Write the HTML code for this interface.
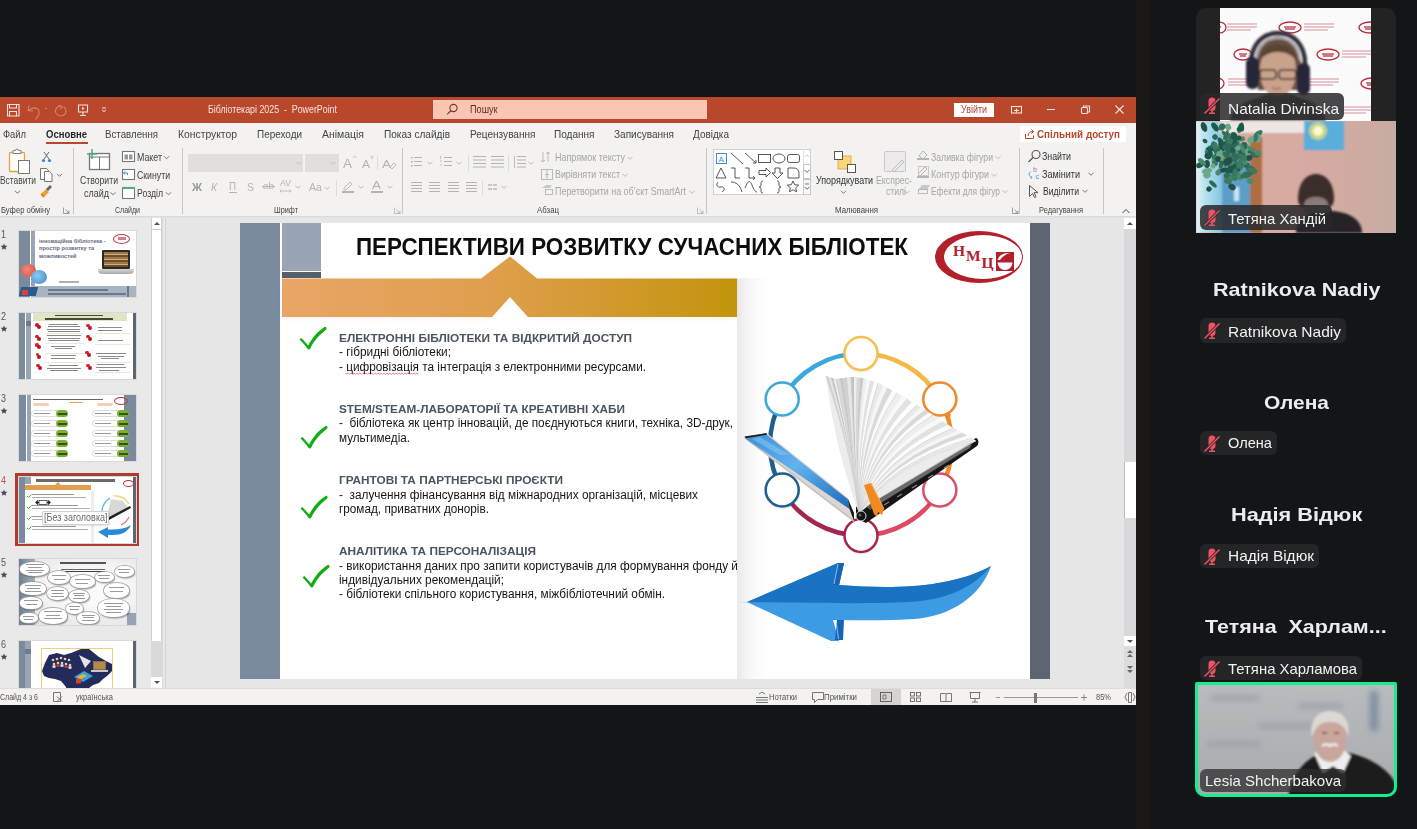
<!DOCTYPE html>
<html><head><meta charset="utf-8"><style>
*{margin:0;padding:0;box-sizing:border-box}
html,body{width:1417px;height:829px;overflow:hidden}
body{background:#131619;position:relative;font-family:"Liberation Sans",sans-serif}
.a{position:absolute}
.t{position:absolute;white-space:nowrap;line-height:1;transform-origin:0 50%}
svg{position:absolute;overflow:visible}
</style></head><body>
<div class="a" style="left:0;top:97px;width:1136px;height:608px;background:#f3f2f1"></div>
<div class="a" style="left:0;top:97px;width:1136px;height:26px;background:#b9472b"></div>
<svg style="left:0;top:97px" width="120" height="26"><g fill="none" stroke="#f6e3dc" stroke-width="1.1"><path d="M7.5 7.5h11.5v11.5h-11.5z"/><path d="M9.5 7.5v3.5h7v-3.5"/><path d="M9.5 19v-4.5h7v4.5"/></g><g fill="none" stroke="#d9826a" stroke-width="1.1"><path d="M29 105.5l-1 5 5 0.5" transform="translate(0 -97)"/><path d="M28.5 14c3-4 8-4 10-1s0 6-3 9.5"/><path d="M45 11.5h2"/><path d="M62 9.5c-4-1-6.5 1.5-6.5 4.5s2.5 5 5.5 5 5.5-2.5 5-5.5c-0.3-2-1.5-3-2.5-3.7"/><path d="M58.5 8.5l3.5 1-1.5 3"/></g><g fill="none" stroke="#f6e3dc" stroke-width="1.1"><path d="M78.5 8h9v7h-9z"/><path d="M83 15v3.5M80 18.5h6"/></g><path d="M82 9.8l2.5 1.6-2.5 1.6z" fill="#f6e3dc"/><path d="M102 13l2 1.6 2-1.6M102 11h4" fill="none" stroke="#f6e3dc" stroke-width="1"/></svg>
<div class="a" style="left:433px;top:100px;width:274px;height:19px;background:#fbc5b3"></div>
<svg style="left:440px;top:100px" width="30" height="19"><g fill="none" stroke="#6b3a2c" stroke-width="1.1"><circle cx="13.5" cy="8" r="3.6"/><path d="M11 10.5l-3.8 3.8"/></g></svg>
<div class="a" style="left:954px;top:103px;width:40px;height:14px;background:#fff"></div>
<svg style="left:1000px;top:97px" width="136" height="26"><g fill="none" stroke="#f6e3dc" stroke-width="1.1"><rect x="11.5" y="9.5" width="10" height="6.5"/><path d="M14 13.5h5M16.5 11.5v4"/><path d="M47 12.5h8"/><rect x="81.5" y="10.5" width="6" height="6" rx="1"/><path d="M83.5 10.5v-1.5h6v6h-2"/><path d="M115.5 8.5l8 8M123.5 8.5l-8 8"/></g></svg>
<div class="a" style="left:46px;top:142px;width:42px;height:2px;background:#b9472b"></div>
<div class="a" style="left:1020px;top:126px;width:106px;height:16px;background:#fff"></div>
<svg style="left:1020px;top:126px" width="20" height="16"><g fill="none" stroke="#b9472b" stroke-width="1"><path d="M5.5 8v4.5h8v-3"/><path d="M8 10c0-3 2-4.5 5-4.5M11.5 3.5l2 2-2 2"/></g></svg>
<div class="a" style="left:73px;top:148px;width:1px;height:66px;background:#c8c6c4"></div>
<div class="a" style="left:182px;top:148px;width:1px;height:66px;background:#c8c6c4"></div>
<div class="a" style="left:402px;top:148px;width:1px;height:66px;background:#c8c6c4"></div>
<div class="a" style="left:706px;top:148px;width:1px;height:66px;background:#c8c6c4"></div>
<div class="a" style="left:1019px;top:148px;width:1px;height:66px;background:#c8c6c4"></div>
<div class="a" style="left:1103px;top:148px;width:1px;height:66px;background:#c8c6c4"></div>
<div class="a" style="left:188px;top:154px;width:115px;height:18px;background:#e1dfdd"></div>
<div class="a" style="left:305px;top:154px;width:34px;height:18px;background:#e1dfdd"></div>
<div class="a" style="left:377px;top:156px;width:1px;height:14px;background:#dcdcdc"></div>
<div class="a" style="left:229px;top:192px;width:8px;height:1px;background:#b4b4b4"></div>
<div class="a" style="left:262px;top:186px;width:13px;height:1px;background:#b4b4b4"></div>
<div class="a" style="left:336px;top:180px;width:1px;height:16px;background:#dcdcdc"></div>
<div class="a" style="left:371px;top:191px;width:12px;height:2px;background:#b4b4b4"></div>
<div class="a" style="left:468px;top:155px;width:1px;height:17px;background:#dcdcdc"></div>
<div class="a" style="left:508px;top:155px;width:1px;height:17px;background:#dcdcdc"></div>
<div class="a" style="left:482px;top:180px;width:1px;height:16px;background:#dcdcdc"></div>
<div class="a" style="left:713px;top:149px;width:98px;height:46px;background:#fff;border:1px solid #d2d0ce"></div>
<div class="a" style="left:803px;top:149px;width:8px;height:46px;border-left:1px solid #e1dfdd"></div>
<div class="a" style="left:803px;top:164px;width:8px;height:15px;border:1px solid #c8c6c4;background:#fff"></div>
<div class="a" style="left:803px;top:179px;width:8px;height:16px;border:1px solid #c8c6c4;background:#f8f8f8"></div>
<svg style="left:0;top:0" width="1136" height="220"><rect x="9.5" y="152.5" width="15" height="19" rx="1" fill="#fff" stroke="#e8a33d" stroke-width="1.3"/><path d="M13 152.5v-2h2.5a1.5 1.5 0 0 1 3 0h2.5v3h-8z" fill="#fff" stroke="#777" stroke-width="0.9"/><rect x="18.5" y="160.5" width="11" height="13" fill="#fff" stroke="#777" stroke-width="1"/><path d="M15.0 190.8l2.5 2.5 2.5-2.5" fill="none" stroke="#666" stroke-width="0.9"/><path d="M44 152l5 7M49 152l-5 7" stroke="#555" stroke-width="0.9" fill="none"/><circle cx="43.5" cy="160.5" r="1.6" fill="#3b7dd8"/><circle cx="49.5" cy="160.5" r="1.6" fill="#3b7dd8"/><path d="M40.5 168.5h6l2 2v9h-8z" fill="#fff" stroke="#666" stroke-width="0.9"/><path d="M44.5 171.5h5l2.5 2.5v7.5h-7.5z" fill="#fff" stroke="#666" stroke-width="0.9"/><path d="M57.0 173.8l2.5 2.5 2.5-2.5" fill="none" stroke="#666" stroke-width="0.9"/><path d="M41 194l5-5 3 3-5 5z" fill="#f0a030"/><path d="M46 189l4-4 2 2-4 4" fill="#666"/><path d="M41 194l3 3" stroke="#e07020" stroke-width="1.5"/><path d="M63.5 207.5v6h6M65.5 209.5l3.5 3.5M69.0 210.5v2.5h-2.5" fill="none" stroke="#8a8a8a" stroke-width="0.8"/><rect x="89.5" y="153.5" width="20" height="16" fill="#fff" stroke="#777" stroke-width="1.3"/><path d="M99.5 157v12.5M89.5 157h20" stroke="#777" stroke-width="1"/><path d="M92 149v10M87 154h10" stroke="#4caf7a" stroke-width="1.5"/><path d="M110.5 192.3l2.5 2.5 2.5-2.5" fill="none" stroke="#666" stroke-width="0.9"/><rect x="122.5" y="151.5" width="12" height="10" fill="#fff" stroke="#777" stroke-width="1.1"/><path d="M124.5 154.5h3.5v5h-3.5zM129 154.5h3.5v5h-3.5z" fill="#999"/><path d="M164.0 156.3l2.5 2.5 2.5-2.5" fill="none" stroke="#666" stroke-width="0.9"/><rect x="122.5" y="169.5" width="12" height="10" fill="#fff" stroke="#777" stroke-width="1.1"/><path d="M125 171.5l-1.5 1.5 1.5 1.5M123.5 173h4v2" fill="none" stroke="#3b7dd8" stroke-width="0.9"/><rect x="122.5" y="187.5" width="12" height="11" fill="#fff" stroke="#777" stroke-width="1.1"/><path d="M122 187h13v2h-13z" fill="#4caf7a"/><path d="M166.0 192.3l2.5 2.5 2.5-2.5" fill="none" stroke="#666" stroke-width="0.9"/><path d="M296.5 161.8l2.5 2.5 2.5-2.5" fill="none" stroke="#c0c0c0" stroke-width="0.9"/><path d="M330.5 161.8l2.5 2.5 2.5-2.5" fill="none" stroke="#c0c0c0" stroke-width="0.9"/><path d="M390 167l4-4 2 2-4 4z" fill="none" stroke="#b4b4b4" stroke-width="0.9"/><path d="M280 191h11M281.5 189.5l-1.5 1.5 1.5 1.5M289.5 189.5l1.5 1.5-1.5 1.5" fill="none" stroke="#b4b4b4" stroke-width="0.8"/><path d="M295.5 185.8l2.5 2.5 2.5-2.5" fill="none" stroke="#b4b4b4" stroke-width="0.9"/><path d="M324.5 186.8l2.5 2.5 2.5-2.5" fill="none" stroke="#b4b4b4" stroke-width="0.9"/><path d="M344 188l6-6 2 2-6 6h-2z" fill="none" stroke="#b4b4b4" stroke-width="0.9"/><rect x="342" y="191" width="12" height="2" fill="#b4b4b4"/><path d="M358.5 185.8l2.5 2.5 2.5-2.5" fill="none" stroke="#b4b4b4" stroke-width="0.9"/><path d="M387.5 185.8l2.5 2.5 2.5-2.5" fill="none" stroke="#b4b4b4" stroke-width="0.9"/><path d="M394.5 207.5v6h6M396.5 209.5l3.5 3.5M400.0 210.5v2.5h-2.5" fill="none" stroke="#b0b0b0" stroke-width="0.8"/><g><rect x="411" y="157" width="1.6" height="1.6" fill="#b4b4b4"/><rect x="411" y="161" width="1.6" height="1.6" fill="#b4b4b4"/><rect x="411" y="165" width="1.6" height="1.6" fill="#b4b4b4"/><path d="M414 157.5h8" stroke="#b4b4b4" stroke-width="1"/><path d="M414 161.5h8" stroke="#b4b4b4" stroke-width="1"/><path d="M414 165.5h8" stroke="#b4b4b4" stroke-width="1"/></g><path d="M427.5 161.8l2.5 2.5 2.5-2.5" fill="none" stroke="#b4b4b4" stroke-width="0.9"/><path d="M444 157.5h8" stroke="#b4b4b4" stroke-width="1"/><path d="M444 161.5h8" stroke="#b4b4b4" stroke-width="1"/><path d="M444 165.5h8" stroke="#b4b4b4" stroke-width="1"/><path d="M440.5 156v3M440 161h2M440 165h2" stroke="#b4b4b4" stroke-width="0.8"/><path d="M456.5 161.8l2.5 2.5 2.5-2.5" fill="none" stroke="#b4b4b4" stroke-width="0.9"/><path d="M473 156.5h13" stroke="#b4b4b4" stroke-width="1"/><path d="M473 160.0h13" stroke="#b4b4b4" stroke-width="1"/><path d="M473 163.5h13" stroke="#b4b4b4" stroke-width="1"/><path d="M473 167.0h13" stroke="#b4b4b4" stroke-width="1"/><path d="M491 156.5h13" stroke="#b4b4b4" stroke-width="1"/><path d="M491 160.0h13" stroke="#b4b4b4" stroke-width="1"/><path d="M491 163.5h13" stroke="#b4b4b4" stroke-width="1"/><path d="M491 167.0h13" stroke="#b4b4b4" stroke-width="1"/><path d="M517 156.5h9" stroke="#b4b4b4" stroke-width="1"/><path d="M517 160.0h9" stroke="#b4b4b4" stroke-width="1"/><path d="M517 163.5h9" stroke="#b4b4b4" stroke-width="1"/><path d="M517 167.0h9" stroke="#b4b4b4" stroke-width="1"/><path d="M514.5 156v12" stroke="#b4b4b4" stroke-width="0.9"/><path d="M528.5 161.8l2.5 2.5 2.5-2.5" fill="none" stroke="#b4b4b4" stroke-width="0.9"/><path d="M411 182.5h11" stroke="#b4b4b4" stroke-width="1"/><path d="M411 185.5h11" stroke="#b4b4b4" stroke-width="1"/><path d="M411 188.5h11" stroke="#b4b4b4" stroke-width="1"/><path d="M411 191.5h11" stroke="#b4b4b4" stroke-width="1"/><path d="M429 182.5h11" stroke="#b4b4b4" stroke-width="1"/><path d="M429 185.5h11" stroke="#b4b4b4" stroke-width="1"/><path d="M429 188.5h11" stroke="#b4b4b4" stroke-width="1"/><path d="M429 191.5h11" stroke="#b4b4b4" stroke-width="1"/><path d="M448 182.5h11" stroke="#b4b4b4" stroke-width="1"/><path d="M448 185.5h11" stroke="#b4b4b4" stroke-width="1"/><path d="M448 188.5h11" stroke="#b4b4b4" stroke-width="1"/><path d="M448 191.5h11" stroke="#b4b4b4" stroke-width="1"/><path d="M466 182.5h11" stroke="#b4b4b4" stroke-width="1"/><path d="M466 185.5h11" stroke="#b4b4b4" stroke-width="1"/><path d="M466 188.5h11" stroke="#b4b4b4" stroke-width="1"/><path d="M466 191.5h11" stroke="#b4b4b4" stroke-width="1"/><path d="M488 184h4v2h-4zM493 184h4v2h-4zM488 188h4v2h-4zM493 188h4v2h-4z" fill="#c8c8c8"/><path d="M501.5 185.8l2.5 2.5 2.5-2.5" fill="none" stroke="#b4b4b4" stroke-width="0.9"/><path d="M543 152v10M541 160l2 2 2-2M548 152v10M546 154l2-2 2 2" fill="none" stroke="#b4b4b4" stroke-width="0.9"/><path d="M627.5 156.8l2.5 2.5 2.5-2.5" fill="none" stroke="#b4b4b4" stroke-width="0.9"/><rect x="541.5" y="169.5" width="11" height="10" fill="none" stroke="#b4b4b4" stroke-width="0.9"/><path d="M547 170v9M545 174.5h4" stroke="#b4b4b4" stroke-width="0.9"/><path d="M622.5 173.8l2.5 2.5 2.5-2.5" fill="none" stroke="#b4b4b4" stroke-width="0.9"/><path d="M542 188l4-3h6l-2 3z" fill="#c8c8c8"/><rect x="545.5" y="189.5" width="7" height="5" fill="none" stroke="#b4b4b4" stroke-width="0.9"/><path d="M689.5 190.8l2.5 2.5 2.5-2.5" fill="none" stroke="#b4b4b4" stroke-width="0.9"/><path d="M697.5 207.5v6h6M699.5 209.5l3.5 3.5M703.0 210.5v2.5h-2.5" fill="none" stroke="#b0b0b0" stroke-width="0.8"/><rect x="716.5" y="153.5" width="10" height="10" fill="none" stroke="#3b8ed8" stroke-width="1"/><text x="718.5" y="162" font-size="8" fill="#3b8ed8" font-family="Liberation Sans">A</text><g fill="none" stroke="#444" stroke-width="0.9"><path d="M731 153l12 11M745 153l11 10M756 163l-3 0M756 163v-3"/><rect x="758.5" y="154.5" width="12" height="8"/><ellipse cx="779" cy="158.5" rx="6" ry="4.5"/><rect x="787.5" y="154.5" width="12" height="8" rx="2"/><path d="M716 178l5-10 5 10z"/><path d="M731 168h4v10h5"/><path d="M745 168h4v10h6M753 176l2 2-2 2"/><path d="M759 170.5h7v-2.5l4.5 4.5-4.5 4.5v-2.5h-7z"/><path d="M775 168h5v5h3l-5.5 5.5-5.5-5.5h3z"/><path d="M788 168h6a5 5 0 0 1 5 5v5h-11z"/><path d="M718 182c-3 3 0 6 3 5s5 3 1 5"/><path d="M731 182c5 0 9 3 11 10"/><path d="M745 188c3-8 5-8 7-3s3 7 5 7"/><path d="M763 181c-2 0-2 1-2 3s0 3-2 3c2 0 2 1 2 3s0 3 2 3"/><path d="M777 181c2 0 2 1 2 3s0 3 2 3c-2 0-2 1-2 3s0 3-2 3"/><path d="M793 181l1.7 3.7 4 .4-3 2.7.9 4-3.6-2-3.6 2 .9-4-3-2.7 4-.4z"/></g><path d="M805 157l2-2 2 2" fill="none" stroke="#c0c0c0" stroke-width="0.8"/><path d="M804.5 169.8l2.5 2.5 2.5-2.5" fill="none" stroke="#555" stroke-width="0.9"/><path d="M805 184h4" stroke="#555" stroke-width="0.8"/><path d="M804.5 186.8l2.5 2.5 2.5-2.5" fill="none" stroke="#555" stroke-width="0.9"/><rect x="838" y="156" width="13" height="13" fill="#f8d67a" stroke="#e0a030" stroke-width="0.8"/><rect x="834.5" y="151.5" width="8" height="8" fill="#fff" stroke="#555" stroke-width="1"/><rect x="847.5" y="164.5" width="8" height="8" fill="#fff" stroke="#555" stroke-width="1"/><path d="M841.0 190.8l2.5 2.5 2.5-2.5" fill="none" stroke="#666" stroke-width="0.9"/><rect x="884.5" y="151.5" width="21" height="20" rx="1" fill="#eceaea" stroke="#c8c8c8" stroke-width="1"/><path d="M892 170l10-10 2 2-10 10z" fill="#e8e8e8" stroke="#b8b8b8" stroke-width="0.9"/><path d="M904.5 190.8l2.5 2.5 2.5-2.5" fill="none" stroke="#b4b4b4" stroke-width="0.9"/><path d="M919 156l4-5 4 4-4 4z" fill="none" stroke="#b4b4b4" stroke-width="1"/><rect x="917" y="158" width="12" height="2" fill="#b4b4b4"/><path d="M995.5 156.3l2.5 2.5 2.5-2.5" fill="none" stroke="#b4b4b4" stroke-width="0.9"/><path d="M918 174l7-7 2 2-7 7z" fill="none" stroke="#b4b4b4" stroke-width="1"/><rect x="918.5" y="166.5" width="10" height="9" fill="none" stroke="#c0c0c0" stroke-width="0.8"/><rect x="917" y="176" width="12" height="2" fill="#b4b4b4"/><path d="M991.5 173.8l2.5 2.5 2.5-2.5" fill="none" stroke="#b4b4b4" stroke-width="0.9"/><path d="M918 190l4-5h8l-3 5z" fill="#c8c8c8"/><rect x="918.5" y="189.5" width="9" height="4" fill="none" stroke="#b4b4b4" stroke-width="0.9"/><path d="M1002.5 190.3l2.5 2.5 2.5-2.5" fill="none" stroke="#b4b4b4" stroke-width="0.9"/><path d="M1012.5 207.5v6h6M1014.5 209.5l3.5 3.5M1018.0 210.5v2.5h-2.5" fill="none" stroke="#8a8a8a" stroke-width="0.8"/><circle cx="1036" cy="154.5" r="4" fill="none" stroke="#555" stroke-width="1.1"/><path d="M1033 157.5l-4.5 4.5" stroke="#555" stroke-width="1.2"/><text x="1033" y="172" font-size="7" fill="#b36bd8" font-family="Liberation Sans">b</text><text x="1035.5" y="179" font-size="7" fill="#3b8ed8" font-family="Liberation Sans">c</text><path d="M1030.5 172c-2 1-2 4 1 5M1030.5 177l1.5 0.5-1 1.2" fill="none" stroke="#3b8ed8" stroke-width="0.9"/><path d="M1088.5 172.8l2.5 2.5 2.5-2.5" fill="none" stroke="#666" stroke-width="0.9"/><path d="M1029.5 185.5v11l3-3 2 4 1.5-0.8-2-4h4z" fill="none" stroke="#555" stroke-width="1"/><path d="M1082.5 189.8l2.5 2.5 2.5-2.5" fill="none" stroke="#666" stroke-width="0.9"/><path d="M1122.5 213l3.5-3.5 3.5 3.5" fill="none" stroke="#444" stroke-width="1"/></svg>
<div class="a" style="left:0;top:216px;width:166px;height:473px;background:#e9e9e9;overflow:hidden"><div class="a" style="left:0;top:-216px;width:166px;height:1000px">
<div class="a" style="left:165px;top:216px;width:1px;height:473px;background:#d4d4d4"></div>
<div class="a" style="left:151px;top:218px;width:12px;height:471px;background:#d9d9d9"></div>
<div class="a" style="left:151px;top:218px;width:11px;height:423px;background:#fff;border-left:1px solid #d0d0d0;border-right:1px solid #d0d0d0"></div>
<div class="a" style="left:151px;top:229px;width:11px;height:1px;background:#d0d0d0"></div>
<div class="a" style="left:151px;top:677px;width:11px;height:11px;background:#fff"></div>
<svg style="left:151px;top:216px" width="12" height="473"><path d="M3 9l3-3 3 3z" fill="#555"/><path d="M3 465l3 3 3-3z" fill="#555"/></svg>
<svg style="left:0.8px;top:242.5px" width="10" height="10"><path transform="scale(0.75)" d="M4 0.5l1.3 3 3.2.3-2.4 2.1.7 3.2-2.8-1.7-2.8 1.7.7-3.2-2.4-2.1 3.2-.3z" fill="#4a4a4a"/></svg>
<svg style="left:0.8px;top:324.5px" width="10" height="10"><path transform="scale(0.75)" d="M4 0.5l1.3 3 3.2.3-2.4 2.1.7 3.2-2.8-1.7-2.8 1.7.7-3.2-2.4-2.1 3.2-.3z" fill="#4a4a4a"/></svg>
<svg style="left:0.8px;top:406.5px" width="10" height="10"><path transform="scale(0.75)" d="M4 0.5l1.3 3 3.2.3-2.4 2.1.7 3.2-2.8-1.7-2.8 1.7.7-3.2-2.4-2.1 3.2-.3z" fill="#4a4a4a"/></svg>
<svg style="left:0.8px;top:488.5px" width="10" height="10"><path transform="scale(0.75)" d="M4 0.5l1.3 3 3.2.3-2.4 2.1.7 3.2-2.8-1.7-2.8 1.7.7-3.2-2.4-2.1 3.2-.3z" fill="#4a4a4a"/></svg>
<svg style="left:0.8px;top:570.5px" width="10" height="10"><path transform="scale(0.75)" d="M4 0.5l1.3 3 3.2.3-2.4 2.1.7 3.2-2.8-1.7-2.8 1.7.7-3.2-2.4-2.1 3.2-.3z" fill="#4a4a4a"/></svg>
<svg style="left:0.8px;top:652.5px" width="10" height="10"><path transform="scale(0.75)" d="M4 0.5l1.3 3 3.2.3-2.4 2.1.7 3.2-2.8-1.7-2.8 1.7.7-3.2-2.4-2.1 3.2-.3z" fill="#4a4a4a"/></svg>
<div class="a" style="left:15px;top:473px;width:124px;height:73px;border:3px solid #b03a2e"></div>
<div class="a" style="left:19px;top:231px;width:117px;height:66px;background:#fff;overflow:hidden;box-shadow:0 0 0 1px #d8d8d8"><div class="a" style="left:0;top:0;width:11px;height:66px;background:#7b8a9c"></div><div class="a" style="left:12px;top:0;width:4px;height:66px;background:#9aa5b4"></div><div class="a" style="left:12px;top:55px;width:105px;height:11px;background:#a9b4c3"></div><div class="a" style="left:108px;top:55px;width:2px;height:11px;background:#6d7a8a"></div><div class="a" style="left:20px;top:7px;font:bold 5.6px/7.4px 'Liberation Sans';color:#5f6a80;white-space:nowrap">інноваційна бібліотека -<br>простір розвитку та<br>можливостей</div><div class="a" style="left:94px;top:3px;width:17px;height:10px;border:1.2px solid #c0394a;border-radius:50%"></div><div class="a" style="left:99px;top:6px;width:8px;height:3px;background:#d08090"></div><div class="a" style="left:83px;top:19px;width:28px;height:19px;background:#2e2a28;border-radius:1px"></div><div class="a" style="left:85px;top:21px;width:24px;height:15px;background:repeating-linear-gradient(#a07848 0 2px,#d8b070 2px 3px,#6a5030 3px 5px)"></div><div class="a" style="left:79px;top:38px;width:36px;height:5px;background:linear-gradient(#d8d8d8,#a8a8a8);border-radius:0 0 4px 4px"></div><div class="a" style="left:2px;top:33px;width:15px;height:13px;background:radial-gradient(circle at 40% 40%,#f08878,#d84a38);border-radius:50%"></div><div class="a" style="left:12px;top:39px;width:16px;height:14px;background:radial-gradient(circle at 40% 40%,#90c8f0,#3a88d0);border-radius:50%"></div><div class="a" style="left:1px;top:56px;width:17px;height:9px;background:#2a5a90;transform:skewX(-15deg)"></div><div class="a" style="left:3px;top:59px;width:6px;height:5px;background:#e04030"></div><div class="a" style="left:40px;top:50px;width:20px;height:1.5px;background:#b0b0b0"></div><div class="a" style="left:29px;top:58px;width:60px;height:1.5px;background:#6a7890"></div><div class="a" style="left:29px;top:62px;width:78px;height:1.5px;background:#6a7890"></div></div>
<div class="a" style="left:19px;top:313px;width:117px;height:66px;background:#fff;overflow:hidden;box-shadow:0 0 0 1px #d8d8d8"><div class="a" style="left:0;top:0;width:6px;height:66px;background:#7b8a9c"></div><div class="a" style="left:6.5px;top:0;width:5.5px;height:66px;background:#9aa5b4"></div><div class="a" style="left:6.5px;top:8px;width:5.5px;height:4.5px;background:#6d7a8a"></div><div class="a" style="left:114px;top:0;width:3px;height:66px;background:#5c6571"></div><div class="a" style="left:14px;top:0;width:94px;height:8px;background:#dde7c6"></div><div class="a" style="left:36px;top:1.5px;width:48px;height:1.5px;background:#4a4a30"></div><div class="a" style="left:26px;top:5px;width:68px;height:1.5px;background:#4a4a30"></div><div class="a" style="left:16px;top:10px;width:3.5px;height:3.5px;background:#d81e2a;border-radius:50%"></div><div class="a" style="left:17.5px;top:12px;width:4px;height:4px;background:#c0141e;border-radius:50%"></div><div class="a" style="left:16px;top:21.5px;width:3.5px;height:3.5px;background:#d81e2a;border-radius:50%"></div><div class="a" style="left:17.5px;top:23.5px;width:4px;height:4px;background:#c0141e;border-radius:50%"></div><div class="a" style="left:16px;top:30px;width:3.5px;height:3.5px;background:#d81e2a;border-radius:50%"></div><div class="a" style="left:17.5px;top:32px;width:4px;height:4px;background:#c0141e;border-radius:50%"></div><div class="a" style="left:16.5px;top:39.5px;width:3.5px;height:3.5px;background:#d81e2a;border-radius:50%"></div><div class="a" style="left:18.0px;top:41.5px;width:4px;height:4px;background:#c0141e;border-radius:50%"></div><div class="a" style="left:17px;top:50.5px;width:3.5px;height:3.5px;background:#d81e2a;border-radius:50%"></div><div class="a" style="left:18.5px;top:52.5px;width:4px;height:4px;background:#c0141e;border-radius:50%"></div><div class="a" style="left:67px;top:10.5px;width:3.5px;height:3.5px;background:#d81e2a;border-radius:50%"></div><div class="a" style="left:68.5px;top:12.5px;width:4px;height:4px;background:#c0141e;border-radius:50%"></div><div class="a" style="left:67px;top:21.5px;width:3.5px;height:3.5px;background:#d81e2a;border-radius:50%"></div><div class="a" style="left:68.5px;top:23.5px;width:4px;height:4px;background:#c0141e;border-radius:50%"></div><div class="a" style="left:66px;top:37.5px;width:3.5px;height:3.5px;background:#d81e2a;border-radius:50%"></div><div class="a" style="left:67.5px;top:39.5px;width:4px;height:4px;background:#c0141e;border-radius:50%"></div><div class="a" style="left:67px;top:50.5px;width:3.5px;height:3.5px;background:#d81e2a;border-radius:50%"></div><div class="a" style="left:68.5px;top:52.5px;width:4px;height:4px;background:#c0141e;border-radius:50%"></div><div class="a" style="left:30px;top:10.5px;width:29px;height:1px;background:#8a8a8a"></div><div class="a" style="left:29px;top:13px;width:32px;height:1px;background:#8a8a8a"></div><div class="a" style="left:28px;top:15.5px;width:33px;height:1px;background:#8a8a8a"></div><div class="a" style="left:29px;top:18px;width:32px;height:1px;background:#8a8a8a"></div><div class="a" style="left:28px;top:22px;width:34px;height:1px;background:#8a8a8a"></div><div class="a" style="left:29px;top:24.5px;width:32px;height:1px;background:#8a8a8a"></div><div class="a" style="left:30px;top:27px;width:30px;height:1px;background:#8a8a8a"></div><div class="a" style="left:32px;top:32.5px;width:24px;height:1px;background:#8a8a8a"></div><div class="a" style="left:36px;top:35px;width:17px;height:1px;background:#8a8a8a"></div><div class="a" style="left:32px;top:42px;width:25px;height:1px;background:#8a8a8a"></div><div class="a" style="left:32px;top:44.5px;width:24px;height:1px;background:#8a8a8a"></div><div class="a" style="left:30px;top:52px;width:29px;height:1px;background:#8a8a8a"></div><div class="a" style="left:28px;top:54.5px;width:34px;height:1px;background:#8a8a8a"></div><div class="a" style="left:31px;top:57px;width:28px;height:1px;background:#8a8a8a"></div><div class="a" style="left:79px;top:14px;width:24px;height:1px;background:#8a8a8a"></div><div class="a" style="left:79px;top:16.5px;width:24px;height:1px;background:#8a8a8a"></div><div class="a" style="left:79px;top:27px;width:25px;height:1px;background:#8a8a8a"></div><div class="a" style="left:77px;top:40px;width:30px;height:1px;background:#8a8a8a"></div><div class="a" style="left:79px;top:42.5px;width:26px;height:1px;background:#8a8a8a"></div><div class="a" style="left:82px;top:45px;width:18px;height:1px;background:#8a8a8a"></div><div class="a" style="left:78px;top:51px;width:27px;height:1px;background:#8a8a8a"></div><div class="a" style="left:77px;top:54px;width:30px;height:1px;background:#8a8a8a"></div><div class="a" style="left:80px;top:56.5px;width:20px;height:1px;background:#8a8a8a"></div><div class="a" style="left:27px;top:20px;width:38px;height:1px;background:#ece8d8"></div><div class="a" style="left:27px;top:30px;width:38px;height:1px;background:#ece8d8"></div><div class="a" style="left:27px;top:40px;width:38px;height:1px;background:#ece8d8"></div><div class="a" style="left:27px;top:49px;width:38px;height:1px;background:#ece8d8"></div><div class="a" style="left:76px;top:20px;width:35px;height:1px;background:#ece8d8"></div><div class="a" style="left:76px;top:31px;width:35px;height:1px;background:#ece8d8"></div><div class="a" style="left:76px;top:49px;width:35px;height:1px;background:#ece8d8"></div><div class="a" style="left:76px;top:59px;width:35px;height:1px;background:#ece8d8"></div></div>
<div class="a" style="left:19px;top:395px;width:117px;height:66px;background:#fff;overflow:hidden;box-shadow:0 0 0 1px #d8d8d8"><div class="a" style="left:0;top:0;width:7px;height:66px;background:#7b8a9c"></div><div class="a" style="left:8px;top:0;width:4px;height:66px;background:#9aa5b4"></div><div class="a" style="left:105px;top:0;width:12px;height:66px;background:#7b8a9c"></div><div class="a" style="left:14px;top:3.5px;width:70px;height:1.5px;background:#666"></div><div class="a" style="left:95px;top:2px;width:14px;height:8px;border:1px solid #c0394a;border-radius:50%"></div><div class="a" style="left:14px;top:8px;width:16px;height:3px;background:#f5d0b0;border-radius:2px"></div><div class="a" style="left:78px;top:8px;width:16px;height:3px;background:#f5d0b0;border-radius:2px"></div><div class="a" style="left:50px;top:7px;width:14px;height:1px;background:#e8a040"></div><div class="a" style="left:12px;top:15px;width:30px;height:7px;border:1px solid #ddd;border-radius:4px;background:#fff"></div><div class="a" style="left:37px;top:15px;width:12px;height:7px;background:#7ab030;border-radius:4px"></div><div class="a" style="left:12px;top:25px;width:30px;height:7px;border:1px solid #ddd;border-radius:4px;background:#fff"></div><div class="a" style="left:37px;top:25px;width:12px;height:7px;background:#7ab030;border-radius:4px"></div><div class="a" style="left:12px;top:35px;width:30px;height:7px;border:1px solid #ddd;border-radius:4px;background:#fff"></div><div class="a" style="left:37px;top:35px;width:12px;height:7px;background:#7ab030;border-radius:4px"></div><div class="a" style="left:12px;top:45px;width:30px;height:7px;border:1px solid #ddd;border-radius:4px;background:#fff"></div><div class="a" style="left:37px;top:45px;width:12px;height:7px;background:#7ab030;border-radius:4px"></div><div class="a" style="left:12px;top:55px;width:30px;height:7px;border:1px solid #ddd;border-radius:4px;background:#fff"></div><div class="a" style="left:37px;top:55px;width:12px;height:7px;background:#7ab030;border-radius:4px"></div><div class="a" style="left:73px;top:15px;width:30px;height:7px;border:1px solid #ddd;border-radius:4px;background:#fff"></div><div class="a" style="left:98px;top:15px;width:12px;height:7px;background:#7ab030;border-radius:4px"></div><div class="a" style="left:73px;top:25px;width:30px;height:7px;border:1px solid #ddd;border-radius:4px;background:#fff"></div><div class="a" style="left:98px;top:25px;width:12px;height:7px;background:#7ab030;border-radius:4px"></div><div class="a" style="left:73px;top:35px;width:30px;height:7px;border:1px solid #ddd;border-radius:4px;background:#fff"></div><div class="a" style="left:98px;top:35px;width:12px;height:7px;background:#7ab030;border-radius:4px"></div><div class="a" style="left:73px;top:45px;width:30px;height:7px;border:1px solid #ddd;border-radius:4px;background:#fff"></div><div class="a" style="left:98px;top:45px;width:12px;height:7px;background:#7ab030;border-radius:4px"></div><div class="a" style="left:73px;top:55px;width:30px;height:7px;border:1px solid #ddd;border-radius:4px;background:#fff"></div><div class="a" style="left:98px;top:55px;width:12px;height:7px;background:#7ab030;border-radius:4px"></div><div class="a" style="left:15px;top:18px;width:16px;height:1px;background:#999"></div><div class="a" style="left:38.5px;top:17.5px;width:9px;height:2px;background:#35501a"></div><div class="a" style="left:15px;top:28px;width:16px;height:1px;background:#999"></div><div class="a" style="left:38.5px;top:27.5px;width:9px;height:2px;background:#35501a"></div><div class="a" style="left:15px;top:38px;width:16px;height:1px;background:#999"></div><div class="a" style="left:38.5px;top:37.5px;width:9px;height:2px;background:#35501a"></div><div class="a" style="left:15px;top:48px;width:16px;height:1px;background:#999"></div><div class="a" style="left:38.5px;top:47.5px;width:9px;height:2px;background:#35501a"></div><div class="a" style="left:15px;top:58px;width:16px;height:1px;background:#999"></div><div class="a" style="left:38.5px;top:57.5px;width:9px;height:2px;background:#35501a"></div><div class="a" style="left:76px;top:18px;width:16px;height:1px;background:#999"></div><div class="a" style="left:99.5px;top:17.5px;width:9px;height:2px;background:#35501a"></div><div class="a" style="left:76px;top:28px;width:16px;height:1px;background:#999"></div><div class="a" style="left:99.5px;top:27.5px;width:9px;height:2px;background:#35501a"></div><div class="a" style="left:76px;top:38px;width:16px;height:1px;background:#999"></div><div class="a" style="left:99.5px;top:37.5px;width:9px;height:2px;background:#35501a"></div><div class="a" style="left:76px;top:48px;width:16px;height:1px;background:#999"></div><div class="a" style="left:99.5px;top:47.5px;width:9px;height:2px;background:#35501a"></div><div class="a" style="left:76px;top:58px;width:16px;height:1px;background:#999"></div><div class="a" style="left:99.5px;top:57.5px;width:9px;height:2px;background:#35501a"></div></div>
<div class="a" style="left:19px;top:477px;width:117px;height:66px;background:#fff;overflow:hidden;box-shadow:0 0 0 1px #d8d8d8"><div class="a" style="left:0;top:0;width:6px;height:66px;background:#7b8a9c"></div><div class="a" style="left:6px;top:0;width:6px;height:7px;background:#9aa5b4"></div><div class="a" style="left:114px;top:0;width:3px;height:66px;background:#5c6571"></div><div class="a" style="left:17px;top:2px;width:79px;height:2.5px;background:#6a6a6a"></div><div class="a" style="left:104px;top:2.5px;width:11px;height:7px;border:1px solid #c03040;border-radius:50%"></div><svg style="left:0;top:0" width="117" height="66"><path d="M6 8h30l3-3 3 3h30v5h-66z" fill="#e0a050"/><rect x="72" y="13" width="3" height="53" fill="#eeeeee"/><path d="M83 35a17 17 0 0 1 8-14" fill="none" stroke="#50b0e0" stroke-width="1.2"/><path d="M94 19a17 17 0 0 1 16 8" fill="none" stroke="#f0d060" stroke-width="1.2"/><path d="M110 40a17 17 0 0 1-8 8" fill="none" stroke="#e07080" stroke-width="1.2"/><path d="M88 40L92 22L104 24L110 32z" fill="#d8d8d8"/><path d="M88 41L111 29L112 31L90 43z" fill="#222"/><path d="M79 55L89 50L89 52.5C98 53 106 52 112 48C109 55 102 58 94 58L89 58L89 61z" fill="#2a88d8"/></svg><svg style="left:8px;top:17px" width="5" height="4"><path d="M0 2l1.5 1.5 3-3" fill="none" stroke="#30b030" stroke-width="1"/></svg><div class="a" style="left:13px;top:17px;width:42px;height:1px;background:#999"></div><div class="a" style="left:13px;top:19.5px;width:54px;height:0.8px;background:#b0b0b0"></div><svg style="left:8px;top:28px" width="5" height="4"><path d="M0 2l1.5 1.5 3-3" fill="none" stroke="#30b030" stroke-width="1"/></svg><div class="a" style="left:13px;top:28px;width:46px;height:1px;background:#999"></div><div class="a" style="left:13px;top:30.5px;width:58px;height:0.8px;background:#b0b0b0"></div><svg style="left:8px;top:39px" width="5" height="4"><path d="M0 2l1.5 1.5 3-3" fill="none" stroke="#30b030" stroke-width="1"/></svg><div class="a" style="left:13px;top:39px;width:36px;height:1px;background:#999"></div><div class="a" style="left:13px;top:41.5px;width:48px;height:0.8px;background:#b0b0b0"></div><svg style="left:8px;top:49px" width="5" height="4"><path d="M0 2l1.5 1.5 3-3" fill="none" stroke="#30b030" stroke-width="1"/></svg><div class="a" style="left:13px;top:49px;width:44px;height:1px;background:#999"></div><div class="a" style="left:13px;top:51.5px;width:56px;height:0.8px;background:#b0b0b0"></div><svg style="left:16px;top:22px" width="16" height="7"><path d="M1 3.5h14M3 1.5l-2 2 2 2M13 1.5l2 2-2 2" fill="none" stroke="#222" stroke-width="1.2"/><rect x="4" y="1.5" width="8" height="4" fill="#fff" stroke="#333" stroke-width="0.8"/></svg></div>
<div class="a" style="left:42px;top:510.5px;width:67px;height:14px;background:#fff;border:1px solid #d0d0d0;border-radius:2px;box-shadow:1px 1px 2px rgba(0,0,0,.12)"></div>
<div class="a" style="left:19px;top:559px;width:117px;height:66px;background:#fff;overflow:hidden;box-shadow:0 0 0 1px #d8d8d8"><div class="a" style="left:0;top:0;width:117px;height:66px;background:radial-gradient(ellipse at 60% 45%,#fafafa 30%,#dfe0e3 100%)"></div><div class="a" style="left:0;top:0;width:16px;height:66px;background:linear-gradient(90deg,#6e7e92,#a4b0be)"></div><div class="a" style="left:108px;top:54px;width:9px;height:12px;background:#95a3b4"></div><div class="a" style="left:41px;top:3.3px;width:46px;height:2px;background:#555"></div><div class="a" style="left:42px;top:9.5px;width:44px;height:1.5px;background:#666"></div><div class="a" style="left:42px;top:11.5px;width:44px;height:0.7px;background:#444"></div><div class="a" style="left:1.4px;top:2.8px;width:29.0px;height:14.5px;background:#fff;border-radius:45%;box-shadow:0 0 0 0.7px #9a9a9a,1px 1.5px 1.5px rgba(0,0,0,.35)"></div><div class="a" style="left:6.9px;top:5.4px;width:18.0px;height:0.7px;background:#9a9a9a"></div><div class="a" style="left:8.7px;top:8.1px;width:14.5px;height:0.7px;background:#9a9a9a"></div><div class="a" style="left:6.9px;top:10.7px;width:18.0px;height:0.7px;background:#9a9a9a"></div><div class="a" style="left:8.7px;top:13.3px;width:14.5px;height:0.7px;background:#9a9a9a"></div><div class="a" style="left:29.0px;top:12.3px;width:22.0px;height:12.7px;background:#fff;border-radius:45%;box-shadow:0 0 0 0.7px #9a9a9a,1px 1.5px 1.5px rgba(0,0,0,.35)"></div><div class="a" style="left:33.2px;top:15.9px;width:13.6px;height:0.7px;background:#9a9a9a"></div><div class="a" style="left:34.5px;top:19.6px;width:11.0px;height:0.7px;background:#9a9a9a"></div><div class="a" style="left:51.2px;top:16.4px;width:24.4px;height:13.0px;background:#fff;border-radius:45%;box-shadow:0 0 0 0.7px #9a9a9a,1px 1.5px 1.5px rgba(0,0,0,.35)"></div><div class="a" style="left:55.8px;top:20.1px;width:15.1px;height:0.7px;background:#9a9a9a"></div><div class="a" style="left:57.3px;top:23.8px;width:12.2px;height:0.7px;background:#9a9a9a"></div><div class="a" style="left:75.6px;top:12.7px;width:19.4px;height:10.3px;background:#fff;border-radius:45%;box-shadow:0 0 0 0.7px #9a9a9a,1px 1.5px 1.5px rgba(0,0,0,.35)"></div><div class="a" style="left:79.3px;top:15.6px;width:12.0px;height:0.7px;background:#9a9a9a"></div><div class="a" style="left:80.4px;top:18.6px;width:9.7px;height:0.7px;background:#9a9a9a"></div><div class="a" style="left:95.5px;top:6.9px;width:19.0px;height:10.8px;background:#fff;border-radius:45%;box-shadow:0 0 0 0.7px #9a9a9a,1px 1.5px 1.5px rgba(0,0,0,.35)"></div><div class="a" style="left:99.1px;top:10.0px;width:11.8px;height:0.7px;background:#9a9a9a"></div><div class="a" style="left:100.2px;top:13.1px;width:9.5px;height:0.7px;background:#9a9a9a"></div><div class="a" style="left:1.4px;top:22.7px;width:25.8px;height:13.6px;background:#fff;border-radius:45%;box-shadow:0 0 0 0.7px #9a9a9a,1px 1.5px 1.5px rgba(0,0,0,.35)"></div><div class="a" style="left:6.3px;top:25.7px;width:16.0px;height:0.7px;background:#9a9a9a"></div><div class="a" style="left:7.8px;top:28.7px;width:12.9px;height:0.7px;background:#9a9a9a"></div><div class="a" style="left:6.3px;top:31.8px;width:16.0px;height:0.7px;background:#9a9a9a"></div><div class="a" style="left:28.0px;top:28.0px;width:21.4px;height:13.2px;background:#fff;border-radius:45%;box-shadow:0 0 0 0.7px #9a9a9a,1px 1.5px 1.5px rgba(0,0,0,.35)"></div><div class="a" style="left:32.1px;top:30.9px;width:13.3px;height:0.7px;background:#9a9a9a"></div><div class="a" style="left:33.4px;top:33.9px;width:10.7px;height:0.7px;background:#9a9a9a"></div><div class="a" style="left:32.1px;top:36.8px;width:13.3px;height:0.7px;background:#9a9a9a"></div><div class="a" style="left:50.3px;top:30.8px;width:20.0px;height:12.7px;background:#fff;border-radius:45%;box-shadow:0 0 0 0.7px #9a9a9a,1px 1.5px 1.5px rgba(0,0,0,.35)"></div><div class="a" style="left:54.1px;top:33.6px;width:12.4px;height:0.7px;background:#9a9a9a"></div><div class="a" style="left:55.3px;top:36.4px;width:10.0px;height:0.7px;background:#9a9a9a"></div><div class="a" style="left:54.1px;top:39.3px;width:12.4px;height:0.7px;background:#9a9a9a"></div><div class="a" style="left:85.0px;top:24.0px;width:25.0px;height:14.5px;background:#fff;border-radius:45%;box-shadow:0 0 0 0.7px #9a9a9a,1px 1.5px 1.5px rgba(0,0,0,.35)"></div><div class="a" style="left:89.8px;top:28.1px;width:15.5px;height:0.7px;background:#9a9a9a"></div><div class="a" style="left:91.2px;top:32.3px;width:12.5px;height:0.7px;background:#9a9a9a"></div><div class="a" style="left:1.0px;top:38.0px;width:22.0px;height:11.8px;background:#fff;border-radius:45%;box-shadow:0 0 0 0.7px #9a9a9a,1px 1.5px 1.5px rgba(0,0,0,.35)"></div><div class="a" style="left:5.2px;top:41.4px;width:13.6px;height:0.7px;background:#9a9a9a"></div><div class="a" style="left:6.5px;top:44.7px;width:11.0px;height:0.7px;background:#9a9a9a"></div><div class="a" style="left:46.6px;top:43.9px;width:17.7px;height:10.9px;background:#fff;border-radius:45%;box-shadow:0 0 0 0.7px #9a9a9a,1px 1.5px 1.5px rgba(0,0,0,.35)"></div><div class="a" style="left:50.0px;top:47.0px;width:11.0px;height:0.7px;background:#9a9a9a"></div><div class="a" style="left:51.0px;top:50.1px;width:8.8px;height:0.7px;background:#9a9a9a"></div><div class="a" style="left:78.8px;top:40.3px;width:31.0px;height:18.0px;background:#fff;border-radius:45%;box-shadow:0 0 0 0.7px #9a9a9a,1px 1.5px 1.5px rgba(0,0,0,.35)"></div><div class="a" style="left:84.7px;top:43.6px;width:19.2px;height:0.7px;background:#9a9a9a"></div><div class="a" style="left:86.5px;top:46.8px;width:15.5px;height:0.7px;background:#9a9a9a"></div><div class="a" style="left:84.7px;top:50.1px;width:19.2px;height:0.7px;background:#9a9a9a"></div><div class="a" style="left:86.5px;top:53.4px;width:15.5px;height:0.7px;background:#9a9a9a"></div><div class="a" style="left:20.0px;top:48.5px;width:28.0px;height:16.2px;background:#fff;border-radius:45%;box-shadow:0 0 0 0.7px #9a9a9a,1px 1.5px 1.5px rgba(0,0,0,.35)"></div><div class="a" style="left:25.3px;top:52.1px;width:17.4px;height:0.7px;background:#9a9a9a"></div><div class="a" style="left:27.0px;top:55.7px;width:14.0px;height:0.7px;background:#9a9a9a"></div><div class="a" style="left:25.3px;top:59.3px;width:17.4px;height:0.7px;background:#9a9a9a"></div><div class="a" style="left:0.5px;top:53.9px;width:18.0px;height:10.0px;background:#fff;border-radius:45%;box-shadow:0 0 0 0.7px #9a9a9a,1px 1.5px 1.5px rgba(0,0,0,.35)"></div><div class="a" style="left:3.9px;top:56.8px;width:11.2px;height:0.7px;background:#9a9a9a"></div><div class="a" style="left:5.0px;top:59.6px;width:9.0px;height:0.7px;background:#9a9a9a"></div><div class="a" style="left:58.4px;top:53.0px;width:22.0px;height:11.7px;background:#fff;border-radius:45%;box-shadow:0 0 0 0.7px #9a9a9a,1px 1.5px 1.5px rgba(0,0,0,.35)"></div><div class="a" style="left:62.6px;top:55.6px;width:13.6px;height:0.7px;background:#9a9a9a"></div><div class="a" style="left:63.9px;top:58.2px;width:11.0px;height:0.7px;background:#9a9a9a"></div><div class="a" style="left:62.6px;top:60.8px;width:13.6px;height:0.7px;background:#9a9a9a"></div></div>
<div class="a" style="left:19px;top:641px;width:117px;height:66px;background:#fff;overflow:hidden;box-shadow:0 0 0 1px #d8d8d8"><div class="a" style="left:0;top:0;width:6px;height:66px;background:#7b8a9c"></div><div class="a" style="left:6.3px;top:0;width:5.7px;height:66px;background:#9aa5b4"></div><div class="a" style="left:6.3px;top:8px;width:5.7px;height:4.8px;background:#6d7a8a"></div><div class="a" style="left:114px;top:0;width:3px;height:66px;background:#5c6571"></div><div class="a" style="left:22px;top:7px;width:72px;height:59px;border:1px solid #f0d070;background:#fff"></div><svg style="left:0;top:0" width="117" height="66"><path d="M23 30L26 22L30 14L38 12L45 14L52 12L57 10L62 8L70 8L75 12L80 16L87 20L93 23L93 30L88 35L84 38L80 42L74 44L70 47L68 50L62 48L58 48L55 49L53 54L48 53L47 46L42 40L36 38L30 37L25 35Z" fill="#232a5c"/><g fill="#f0c8a8"><circle cx="34" cy="19" r="1.3"/><circle cx="38" cy="18" r="1.3"/><circle cx="42" cy="17" r="1.3"/><circle cx="46" cy="18" r="1.3"/><circle cx="50" cy="19" r="1.3"/><circle cx="35" cy="23" r="1.3"/><circle cx="39" cy="22" r="1.3"/><circle cx="43" cy="22" r="1.3"/><circle cx="47" cy="23" r="1.3"/><circle cx="51" cy="24" r="1.3"/></g><g fill="#e8e8f0"><rect x="33.5" y="24.3" width="3" height="2.5"/><rect x="41.5" y="23.3" width="3" height="2.5"/><rect x="49.5" y="25.3" width="3" height="2.5"/></g><g fill="#d83838"><rect x="37.5" y="23.3" width="3" height="2.5"/><rect x="45.5" y="24.3" width="3" height="2.5"/></g><path d="M60 14L72 20L66 27Z" fill="#e4e4e8"/><rect x="74" y="20" width="13" height="9" fill="#8a6e48"/><rect x="75" y="21" width="11" height="7" fill="#b08a50"/><rect x="72" y="29" width="17" height="2" fill="#c8c8c8"/><path d="M55 36L65 30L74 35L64 41Z" fill="#3aa0d8"/><path d="M58 36L64 33L68 35L62 38Z" fill="#f0b030"/><rect x="57" y="38" width="5" height="4.5" fill="#e83a1a"/></svg></div>
</div></div>
<div class="a" style="left:166px;top:216px;width:958px;height:473px;background:#e6e6e6"></div>
<div class="a" style="left:0;top:216px;width:1136px;height:2px;background:linear-gradient(#d6d6d6,#e6e6e6)"></div>
<div class="a" style="left:1124px;top:218px;width:12px;height:471px;background:#dcdcdc"></div>
<div class="a" style="left:1124px;top:218px;width:12px;height:11px;background:#fff"></div>
<div class="a" style="left:1124px;top:229px;width:12px;height:407px;background:#d9d9db"></div>
<div class="a" style="left:1124px;top:462px;width:12px;height:56px;background:#fff;border-left:1px solid #b8b8b8"></div>
<div class="a" style="left:1124px;top:636px;width:12px;height:10px;background:#fff"></div>
<svg style="left:1124px;top:216px" width="12" height="473"><path d="M3 9l3-3 3 3z" fill="#555"/><path d="M3 424l3 3 3-3z" fill="#555"/><path d="M3 437l3-3 3 3zM3 441l3-3 3 3z" fill="#666"/><path d="M3 450l3 3 3-3zM3 454l3 3 3-3z" fill="#666"/></svg>
<div class="a" style="left:240px;top:223px;width:810px;height:456px;background:#fff;overflow:hidden">
<div class="a" style="left:0;top:0;width:40px;height:456px;background:#7b8a9c"></div>
<div class="a" style="left:42px;top:0;width:39px;height:48px;background:#9aa5b4"></div>
<div class="a" style="left:42px;top:49px;width:39px;height:6px;background:#56606c"></div>
<div class="a" style="left:790px;top:0;width:20px;height:456px;background:#5c6571"></div>
<div class="a" style="left:497px;top:55px;width:34px;height:401px;background:linear-gradient(90deg,rgba(60,50,70,0.11),rgba(60,50,70,0.05) 30%,rgba(60,50,70,0.015) 65%,rgba(0,0,0,0))"></div>
<svg style="left:0;top:0" width="810" height="455"><defs><linearGradient id="og" x1="0" x2="1"><stop offset="0" stop-color="#e9a566"/><stop offset="0.45" stop-color="#df9f4e"/><stop offset="1" stop-color="#c4940c"/></linearGradient><filter id="sh" x="-5%" y="-20%" width="110%" height="160%"><feGaussianBlur stdDeviation="2.5"/></filter></defs><path d="M42 57h200l28-24 27 24h200v38h-209l-18-21-18 21h-210z" fill="#000" opacity="0.06" filter="url(#sh)"/><path d="M42 55.5h199l29-22 27 22h200v38.5h-209l-18-20-18 20h-210z" fill="url(#og)"/></svg>
</div>
<svg style="left:299px;top:326px" width="30" height="26"><path d="M0.5 13.5L2.2 12C4.5 14 6.5 16.5 9.2 19.5C13 12 18 6 25.5 1C27 0.3 28.3 2 27.2 3.6C21 8.5 15 14.5 11.3 22.5C10.6 23.8 9 23.8 8.3 22.6C6 19 3.2 16 0.5 13.5Z" fill="#12ad12"/></svg>
<svg style="left:300px;top:424.5px" width="30" height="26"><path d="M0.5 13.5L2.2 12C4.5 14 6.5 16.5 9.2 19.5C13 12 18 6 25.5 1C27 0.3 28.3 2 27.2 3.6C21 8.5 15 14.5 11.3 22.5C10.6 23.8 9 23.8 8.3 22.6C6 19 3.2 16 0.5 13.5Z" fill="#12ad12"/></svg>
<svg style="left:300px;top:494.7px" width="30" height="26"><path d="M0.5 13.5L2.2 12C4.5 14 6.5 16.5 9.2 19.5C13 12 18 6 25.5 1C27 0.3 28.3 2 27.2 3.6C21 8.5 15 14.5 11.3 22.5C10.6 23.8 9 23.8 8.3 22.6C6 19 3.2 16 0.5 13.5Z" fill="#12ad12"/></svg>
<svg style="left:302px;top:563.5px" width="30" height="26"><path d="M0.5 13.5L2.2 12C4.5 14 6.5 16.5 9.2 19.5C13 12 18 6 25.5 1C27 0.3 28.3 2 27.2 3.6C21 8.5 15 14.5 11.3 22.5C10.6 23.8 9 23.8 8.3 22.6C6 19 3.2 16 0.5 13.5Z" fill="#12ad12"/></svg>
<svg style="left:345px;top:370.5px" width="76" height="4"><path d="M0 2 l1.5 1.2 l1.5 -1.2 l1.5 1.2 l1.5 -1.2 l1.5 1.2 l1.5 -1.2 l1.5 1.2 l1.5 -1.2 l1.5 1.2 l1.5 -1.2 l1.5 1.2 l1.5 -1.2 l1.5 1.2 l1.5 -1.2 l1.5 1.2 l1.5 -1.2 l1.5 1.2 l1.5 -1.2 l1.5 1.2 l1.5 -1.2 l1.5 1.2 l1.5 -1.2 l1.5 1.2 l1.5 -1.2 l1.5 1.2 l1.5 -1.2 l1.5 1.2 l1.5 -1.2 l1.5 1.2 l1.5 -1.2 l1.5 1.2 l1.5 -1.2 l1.5 1.2 l1.5 -1.2 l1.5 1.2 l1.5 -1.2 l1.5 1.2 l1.5 -1.2 l1.5 1.2 l1.5 -1.2 l1.5 1.2 l1.5 -1.2 l1.5 1.2 l1.5 -1.2 l1.5 1.2 l1.5 -1.2 l1.5 1.2 l1.5 -1.2 l1.5 1.2" fill="none" stroke="#e05858" stroke-width="0.7"/></svg>
<svg style="left:0;top:0" width="1136" height="300"><path fill-rule="evenodd" fill="#b3202c" d="M935 257a44 26 0 1 0 88 0a44 26 0 1 0 -88 0zM944 257a39 22 0 1 0 78 0a39 22 0 1 0 -78 0z"/><text x="953" y="256" font-family="Liberation Serif" font-weight="bold" font-size="15.5" fill="#b3202c">Н</text><text x="966" y="261" font-family="Liberation Serif" font-weight="bold" font-size="15.5" fill="#b3202c">М</text><text x="981.5" y="268" font-family="Liberation Serif" font-weight="bold" font-size="15.5" fill="#b3202c">Ц</text><rect x="996" y="252" width="18" height="19" fill="#b3202c"/><path d="M997.5 262.5a7.5 7.5 0 0 0 15 0z" fill="#fff"/><path d="M997.5 260c2-5 6-7.5 12-7-4 1.5-7 3.5-9.5 7z" fill="#fff"/></svg>
<svg style="left:0;top:0" width="1136" height="700"><defs><linearGradient id="scr" x1="0" y1="0" x2="1" y2="1"><stop offset="0" stop-color="#3d8fd8"/><stop offset="0.45" stop-color="#62b2ee"/><stop offset="1" stop-color="#1f6ab8"/></linearGradient><linearGradient id="pg" x1="0" y1="0" x2="1" y2="0"><stop offset="0" stop-color="#e6e6e6"/><stop offset="0.3" stop-color="#f4f4f4"/><stop offset="1" stop-color="#fbfbfb"/></linearGradient><filter id="bl1"><feGaussianBlur stdDeviation="1.2"/></filter></defs><path d="M782.2 399.0A91 91 0 0 1 861.0 353.5" fill="none" stroke="#3aa8dc" stroke-width="4.5"/><path d="M861.0 353.5A91 91 0 0 1 939.8 399.0" fill="none" stroke="#f4b844" stroke-width="4.5"/><path d="M939.8 399.0A91 91 0 0 1 939.8 490.0" fill="none" stroke="#ec8a2c" stroke-width="4.5"/><path d="M939.8 490.0A91 91 0 0 1 861.0 535.5" fill="none" stroke="#de4a62" stroke-width="4.5"/><path d="M861.0 535.5A91 91 0 0 1 782.2 490.0" fill="none" stroke="#a3264f" stroke-width="4.5"/><path d="M782.2 490.0A91 91 0 0 1 782.2 399.0" fill="none" stroke="#1f5f8f" stroke-width="4.5"/><circle cx="861.0" cy="354.5" r="17.5" fill="#000" opacity="0.10" filter="url(#bl1)"/><circle cx="861.0" cy="353.5" r="16.5" fill="#fff" stroke="#f5c04c" stroke-width="2.5"/><circle cx="939.8" cy="400.0" r="17.5" fill="#000" opacity="0.10" filter="url(#bl1)"/><circle cx="939.8" cy="399.0" r="16.5" fill="#fff" stroke="#ec8a2c" stroke-width="2.5"/><circle cx="939.8" cy="491.0" r="17.5" fill="#000" opacity="0.10" filter="url(#bl1)"/><circle cx="939.8" cy="490.0" r="16.5" fill="#fff" stroke="#d9506a" stroke-width="2.5"/><circle cx="861.0" cy="536.5" r="17.5" fill="#000" opacity="0.10" filter="url(#bl1)"/><circle cx="861.0" cy="535.5" r="16.5" fill="#fff" stroke="#a3264f" stroke-width="2.5"/><circle cx="782.2" cy="491.0" r="17.5" fill="#000" opacity="0.10" filter="url(#bl1)"/><circle cx="782.2" cy="490.0" r="16.5" fill="#fff" stroke="#1f5f8f" stroke-width="2.5"/><circle cx="782.2" cy="400.0" r="17.5" fill="#000" opacity="0.10" filter="url(#bl1)"/><circle cx="782.2" cy="399.0" r="16.5" fill="#fff" stroke="#3aa8dc" stroke-width="2.5"/><path d="M945.8 414.0l5 0-1 6z" fill="#ec8a2c"/><path d="M744.5 436.5L766.5 433L848 498L854 514L854 522L744.5 438.5Z" fill="#dcd6d2"/><path d="M744.5 438.5L854 522L854 520L746 437.5Z" fill="#c8c2be"/><path d="M746.5 437.5L766.5 434.5L847.5 499L849.5 509L746 439Z" fill="url(#scr)"/><path d="M760 437L790 455L780 455L752 439Z" fill="#8ccaf4" opacity="0.5"/><path d="M744.5 436.5L766.5 433L767 434.8L745.5 438.2Z" fill="#1e1e1e"/><path d="M847.5 498L854 513L854 521L849.5 509Z" fill="#1a1a1a"/><path d="M856 507l120-69c3 1 3 6 1 8l-111 77-10-5z" fill="#151515"/><path d="M872 502l98-58 2 2-98 61z" fill="#3a3a3a"/><path d="M884 505l5-3" stroke="#888" stroke-width="1.2"/><path d="M897 497l5-3" stroke="#888" stroke-width="1.2"/><path d="M912 488l5-3" stroke="#888" stroke-width="1.2"/><path d="M928 478l5-3" stroke="#888" stroke-width="1.2"/><path d="M944 468l5-3" stroke="#888" stroke-width="1.2"/><path d="M859 513Q835 450 826 376L836 379L851 377L863 378L878 383L897 393L917 405L933 415L953 428L972 438L976 441L872 503Z" fill="#ececec"/><path d="M859 513Q851.4 451.4 826.0 376.0L828.5 376.8Q851.4 450.8 859 513z" fill="#d0d0d0"/><path d="M859 513Q851.4 450.8 828.5 376.8L831.0 377.5Q851.5 450.3 859 513z" fill="#e6e6e6"/><path d="M859 513Q851.5 450.3 831.0 377.5L833.5 378.2Q851.7 449.8 859 513z" fill="#c2c2c2"/><path d="M859 513Q851.7 449.8 833.5 378.2L836.0 379.0Q851.9 449.4 859 513z" fill="#eeeeee"/><path d="M859 513Q851.9 449.4 836.0 379.0L839.8 378.5Q852.2 448.3 859 513z" fill="#d8d8d8"/><path d="M859 513Q852.2 448.3 839.8 378.5L843.5 378.0Q852.5 447.2 859 513z" fill="#c8c8c8"/><path d="M859 513Q852.5 447.2 843.5 378.0L847.2 377.5Q852.9 446.1 859 513z" fill="#d0d0d0"/><path d="M859 513Q852.9 446.1 847.2 377.5L851.0 377.0Q853.4 445.0 859 513z" fill="#e6e6e6"/><path d="M859 513Q853.4 445.0 851.0 377.0L854.0 377.2Q853.8 444.3 859 513z" fill="#c2c2c2"/><path d="M859 513Q853.8 444.3 854.0 377.2L857.0 377.5Q854.3 443.6 859 513z" fill="#eeeeee"/><path d="M859 513Q854.3 443.6 857.0 377.5L860.0 377.8Q854.8 442.8 859 513z" fill="#d8d8d8"/><path d="M859 513Q854.8 442.8 860.0 377.8L863.0 378.0Q855.3 442.1 859 513z" fill="#c8c8c8"/><path d="M859 513Q855.3 442.1 863.0 378.0L866.8 379.2Q856.0 441.9 859 513z" fill="#eeeeee"/><path d="M859 513Q856.0 441.9 866.8 379.2L870.5 380.5Q856.7 441.8 859 513z" fill="#f8f8f8"/><path d="M859 513Q856.7 441.8 870.5 380.5L874.2 381.8Q857.4 441.6 859 513z" fill="#e2e2e2"/><path d="M859 513Q857.4 441.6 874.2 381.8L878.0 383.0Q858.2 441.5 859 513z" fill="#fdfdfd"/><path d="M859 513Q858.2 441.5 878.0 383.0L882.8 385.5Q859.3 442.1 859 513z" fill="#e9e9e9"/><path d="M859 513Q859.3 442.1 882.8 385.5L887.5 388.0Q860.3 442.7 859 513z" fill="#f6f6f6"/><path d="M859 513Q860.3 442.7 887.5 388.0L892.2 390.5Q861.5 443.3 859 513z" fill="#d9d9d9"/><path d="M859 513Q861.5 443.3 892.2 390.5L897.0 393.0Q862.6 444.0 859 513z" fill="#fbfbfb"/><path d="M859 513Q862.6 444.0 897.0 393.0L902.0 396.0Q863.9 445.0 859 513z" fill="#eeeeee"/><path d="M859 513Q863.9 445.0 902.0 396.0L907.0 399.0Q865.3 446.0 859 513z" fill="#f8f8f8"/><path d="M859 513Q865.3 446.0 907.0 399.0L912.0 402.0Q866.7 447.1 859 513z" fill="#e2e2e2"/><path d="M859 513Q866.7 447.1 912.0 402.0L917.0 405.0Q868.2 448.2 859 513z" fill="#fdfdfd"/><path d="M859 513Q868.2 448.2 917.0 405.0L921.0 407.5Q869.5 449.0 859 513z" fill="#e9e9e9"/><path d="M859 513Q869.5 449.0 921.0 407.5L925.0 410.0Q870.9 449.9 859 513z" fill="#f6f6f6"/><path d="M859 513Q870.9 449.9 925.0 410.0L929.0 412.5Q872.4 450.8 859 513z" fill="#d9d9d9"/><path d="M859 513Q872.4 450.8 929.0 412.5L933.0 415.0Q873.9 451.8 859 513z" fill="#fbfbfb"/><path d="M859 513Q873.9 451.8 933.0 415.0L938.0 418.2Q875.6 453.2 859 513z" fill="#eeeeee"/><path d="M859 513Q875.6 453.2 938.0 418.2L943.0 421.5Q877.5 454.7 859 513z" fill="#f8f8f8"/><path d="M859 513Q877.5 454.7 943.0 421.5L948.0 424.8Q879.3 456.2 859 513z" fill="#e2e2e2"/><path d="M859 513Q879.3 456.2 948.0 424.8L953.0 428.0Q881.3 457.8 859 513z" fill="#fdfdfd"/><path d="M859 513Q881.3 457.8 953.0 428.0L957.8 430.5Q883.3 458.9 859 513z" fill="#e9e9e9"/><path d="M859 513Q883.3 458.9 957.8 430.5L962.5 433.0Q885.3 460.0 859 513z" fill="#f6f6f6"/><path d="M859 513Q885.3 460.0 962.5 433.0L967.2 435.5Q887.3 461.2 859 513z" fill="#d9d9d9"/><path d="M859 513Q887.3 461.2 967.2 435.5L972.0 438.0Q889.5 462.4 859 513z" fill="#fbfbfb"/><path d="M859 513Q889.5 462.4 972.0 438.0L973.0 438.8Q890.6 462.4 859 513z" fill="#eeeeee"/><path d="M859 513Q890.6 462.4 973.0 438.8L974.0 439.5Q891.8 462.5 859 513z" fill="#f8f8f8"/><path d="M859 513Q891.8 462.5 974.0 439.5L975.0 440.2Q892.9 462.5 859 513z" fill="#e2e2e2"/><path d="M859 513Q892.9 462.5 975.0 440.2L976.0 441.0Q894.1 462.6 859 513z" fill="#fdfdfd"/><path d="M859 513Q851.4 451.4 826.0 376.0" fill="none" stroke="#c4c4c4" stroke-width="0.5"/><path d="M859 513Q851.5 450.3 831.0 377.5" fill="none" stroke="#d6d6d6" stroke-width="0.5"/><path d="M859 513Q851.9 449.4 836.0 379.0" fill="none" stroke="#c4c4c4" stroke-width="0.5"/><path d="M859 513Q852.5 447.2 843.5 378.0" fill="none" stroke="#d6d6d6" stroke-width="0.5"/><path d="M859 513Q853.4 445.0 851.0 377.0" fill="none" stroke="#c4c4c4" stroke-width="0.5"/><path d="M859 513Q854.3 443.6 857.0 377.5" fill="none" stroke="#d6d6d6" stroke-width="0.5"/><path d="M859 513Q855.3 442.1 863.0 378.0" fill="none" stroke="#c4c4c4" stroke-width="0.5"/><path d="M859 513Q856.7 441.8 870.5 380.5" fill="none" stroke="#d6d6d6" stroke-width="0.5"/><path d="M859 513Q858.2 441.5 878.0 383.0" fill="none" stroke="#c4c4c4" stroke-width="0.5"/><path d="M859 513Q860.3 442.7 887.5 388.0" fill="none" stroke="#d6d6d6" stroke-width="0.5"/><path d="M859 513Q862.6 444.0 897.0 393.0" fill="none" stroke="#c4c4c4" stroke-width="0.5"/><path d="M859 513Q865.3 446.0 907.0 399.0" fill="none" stroke="#d6d6d6" stroke-width="0.5"/><path d="M859 513Q868.2 448.2 917.0 405.0" fill="none" stroke="#c4c4c4" stroke-width="0.5"/><path d="M859 513Q870.9 449.9 925.0 410.0" fill="none" stroke="#d6d6d6" stroke-width="0.5"/><path d="M859 513Q873.9 451.8 933.0 415.0" fill="none" stroke="#c4c4c4" stroke-width="0.5"/><path d="M859 513Q877.5 454.7 943.0 421.5" fill="none" stroke="#d6d6d6" stroke-width="0.5"/><path d="M859 513Q881.3 457.8 953.0 428.0" fill="none" stroke="#c4c4c4" stroke-width="0.5"/><path d="M859 513Q885.3 460.0 962.5 433.0" fill="none" stroke="#d6d6d6" stroke-width="0.5"/><path d="M859 513Q889.5 462.4 972.0 438.0" fill="none" stroke="#c4c4c4" stroke-width="0.5"/><path d="M859 513Q891.8 462.5 974.0 439.5" fill="none" stroke="#d6d6d6" stroke-width="0.5"/><path d="M859 513Q894.1 462.6 976.0 441.0" fill="none" stroke="#c4c4c4" stroke-width="0.5"/><path d="M866 506l106-64-2 6-100 62z" fill="#999" opacity="0.5"/><path d="M864 485l7-2 13 26-2 6-4-3-1 5-3-3z" fill="#f08a1c"/><path d="M871 483l13 26" stroke="#f8b060" stroke-width="1"/><circle cx="861" cy="516" r="5" fill="#111" stroke="#ddd" stroke-width="1"/><circle cx="860" cy="515" r="1.5" fill="#666"/></svg>
<svg style="left:0;top:0" width="1136" height="700"><path d="M747 602L838 563h6l-5 22c50 4 110 4 152-19c-10 30-40 50-76 53c-30 2-60 1-82 1l6 21h-8z" fill="#3d9be3"/><path d="M747 602L838 563h6l-5 22c50 4 110 4 152-19c-18 22-45 34-82 36c-40 2-100 1-171 0z" fill="#1a73c2"/><path d="M838 563h6l-5 22h-6z" fill="#1466b4"/><path d="M837 620h7l-1 20h-8z" fill="#1466b4"/><path d="M838 564l-4 20M836 621l2.5 18" stroke="#c8e0f8" stroke-width="0.7"/></svg>
<div class="a" style="left:0;top:689px;width:1136px;height:16px;background:#f3f2f1"></div>
<div class="a" style="left:0;top:688px;width:1136px;height:1px;background:#dcdcdc"></div>
<svg style="left:50px;top:689px" width="20" height="16"><path d="M3.5 3.5h7v9h-7z" fill="none" stroke="#666" stroke-width="0.9"/><path d="M7 7.5l5 5M12 7.5l-5 5" stroke="#666" stroke-width="0.9"/></svg>
<div class="a" style="left:871px;top:689px;width:30px;height:16px;background:#d6d4d2"></div>
<svg style="left:740px;top:689px" width="396" height="16"><path d="M16 13.5h12M16 11h12M16 8.5h12M19 5l3-2 3 2" fill="none" stroke="#666" stroke-width="0.9"/><path d="M72.5 3.5h11v7h-6l-3 3v-3h-2z" fill="none" stroke="#666" stroke-width="0.9"/><rect x="140.5" y="3.5" width="11" height="9" fill="none" stroke="#555" stroke-width="0.9"/><path d="M143 6h3v4h-3z" fill="none" stroke="#555" stroke-width="0.7"/><rect x="170.5" y="3.5" width="4" height="3.5" fill="none" stroke="#666" stroke-width="0.9"/><rect x="176.5" y="3.5" width="4" height="3.5" fill="none" stroke="#666" stroke-width="0.9"/><rect x="170.5" y="9" width="4" height="3.5" fill="none" stroke="#666" stroke-width="0.9"/><rect x="176.5" y="9" width="4" height="3.5" fill="none" stroke="#666" stroke-width="0.9"/><path d="M200.5 4.5h5l.5 .5.5-.5h5v8h-11zM206 5v7.5" fill="none" stroke="#666" stroke-width="0.9"/><path d="M229.5 3.5h11M230.5 3.5v6h9v-6M235 9.5v3.5M232 13h6" fill="none" stroke="#666" stroke-width="0.9"/><path d="M256 8.5h4M264 8.5h74" stroke="#999" stroke-width="1"/><rect x="294" y="4" width="3" height="10" fill="#777"/><path d="M341 8.5h6M344 5.5v6" stroke="#888" stroke-width="1"/><path d="M387 4l-2 4 2 4M393 4l2 4-2 4M388.5 3.5h3v10h-3z" fill="none" stroke="#666" stroke-width="0.9"/></svg>
<div class="a" style="left:1136px;top:0;width:14px;height:829px;background:#1b1815"></div>
<div class="a" style="left:1196px;top:8px;width:200px;height:113px;background:#232323;border-radius:10px 10px 0 0"></div>
<svg style="left:1220px;top:7.5px;overflow:hidden" width="151" height="113"><defs><filter id="pb"><feGaussianBlur stdDeviation="0.9"/></filter></defs><rect width="151" height="113" fill="#fbfbfb"/><ellipse cx="-1.0" cy="19.5" rx="7.0" ry="5.5" fill="none" stroke="#b8303e" stroke-width="1.3"/><path d="M-3 19h4M-2 21h2" stroke="#c05060" stroke-width="1.4"/><path d="M7 16h30M7 19h30M7 22h24" stroke="#d8909a" stroke-width="1.1"/><ellipse cx="70.0" cy="19.5" rx="11.0" ry="5.5" fill="none" stroke="#b8303e" stroke-width="1.3"/><path d="M64 19h12M65 21h10" stroke="#c05060" stroke-width="1.4"/><path d="M84 16h30M84 19h30M84 22h24" stroke="#d8909a" stroke-width="1.1"/><ellipse cx="150.0" cy="19.5" rx="11.0" ry="5.5" fill="none" stroke="#b8303e" stroke-width="1.3"/><path d="M144 19h12M145 21h10" stroke="#c05060" stroke-width="1.4"/><ellipse cx="23.0" cy="46.5" rx="9.0" ry="5.5" fill="none" stroke="#b8303e" stroke-width="1.3"/><path d="M19 46h8M20 48h6" stroke="#c05060" stroke-width="1.4"/><ellipse cx="108.0" cy="46.5" rx="11.0" ry="5.5" fill="none" stroke="#b8303e" stroke-width="1.3"/><path d="M102 46h12M103 48h10" stroke="#c05060" stroke-width="1.4"/><path d="M122 43h30M122 46h30M122 49h24" stroke="#d8909a" stroke-width="1.1"/><ellipse cx="-3.0" cy="75.5" rx="7.0" ry="5.5" fill="none" stroke="#b8303e" stroke-width="1.3"/><path d="M-5 75h4M-4 77h2" stroke="#c05060" stroke-width="1.4"/><path d="M8 71h30M8 74h30M8 77h24" stroke="#d8909a" stroke-width="1.1"/><path d="M89 71h30M89 74h30M89 77h24" stroke="#d8909a" stroke-width="1.1"/><ellipse cx="152.0" cy="75.5" rx="11.0" ry="5.5" fill="none" stroke="#b8303e" stroke-width="1.3"/><path d="M146 75h12M147 77h10" stroke="#c05060" stroke-width="1.4"/><path d="M124 99h28M124 102h28M124 105h22" stroke="#d8909a" stroke-width="1.1"/><g filter="url(#pb)"><path d="M10 113c2-12 14-20 28-23l10-4h22l10 4c14 3 24 11 26 23z" fill="#5e5a58"/><path d="M28 104c8-6 16-9 30-9s24 3 32 9v9h-62z" fill="#7a7470"/><path d="M36 60c-3-14 2-30 22-32 20 2 25 18 22 32l-2 22h-40z" fill="#6a5040"/><path d="M40 62c0-15 7-23 18-23s18 8 18 23c0 18-8 26-18 26s-18-8-18-26z" fill="#caa28c"/><path d="M39 53c2-12 9-17 19-17s17 5 19 17c-5-6-11-9-19-9s-14 3-19 9z" fill="#5a4434"/><path d="M31 56c0-20 12-31 27-31s27 11 27 31" fill="none" stroke="#2e2e3c" stroke-width="4.5"/><path d="M36 52c2-14 10-22 22-22s20 8 22 22" fill="none" stroke="#b8b8c4" stroke-width="1.8"/><rect x="26" y="49" width="13" height="32" rx="6" fill="#26263a"/><rect x="77" y="55" width="13" height="32" rx="6" fill="#26263a"/><rect x="40" y="62" width="16" height="9" rx="3" fill="none" stroke="#3a3030" stroke-width="1.6"/><rect x="59" y="62" width="17" height="9" rx="3" fill="none" stroke="#3a3030" stroke-width="1.6"/><path d="M52 80c3 1 6 1 9 0" stroke="#9a6a60" stroke-width="1.5"/></g></svg>
<div class="a" style="left:1200px;top:93px;width:144px;height:27px;background:rgba(40,40,42,0.85);border-radius:6px"></div><svg style="left:1203px;top:97px" width="18" height="18"><path d="M5.5 4a3.5 3.5 0 0 1 7 0v6.5a3.5 3.5 0 0 1-7 0z" fill="#ee5264"/><path d="M9 13.5v2.5M6 16.2h6" fill="none" stroke="#ee5264" stroke-width="1.6"/><path d="M1.5 16.5l15-15" stroke="#262729" stroke-width="3"/><path d="M1.5 16.5l15-15" stroke="#ee5264" stroke-width="1.4"/></svg>
<svg style="left:1196px;top:121px;overflow:hidden" width="200" height="112"><defs><filter id="pb2"><feGaussianBlur stdDeviation="1.2"/></filter><filter id="pb5"><feGaussianBlur stdDeviation="0.6"/></filter><linearGradient id="wall" x1="0" x2="1"><stop offset="0" stop-color="#dba9a1"/><stop offset="0.6" stop-color="#d6aaa2"/><stop offset="1" stop-color="#c7aca3"/></linearGradient><linearGradient id="win" x1="0" x2="1"><stop offset="0" stop-color="#eef8fa"/><stop offset="0.2" stop-color="#c4e8f2"/><stop offset="1" stop-color="#80c4e0"/></linearGradient></defs><rect width="200" height="112" fill="url(#wall)"/><g filter="url(#pb2)"><rect x="0" y="0" width="27" height="112" fill="url(#win)"/><rect x="24" y="0" width="84" height="12" fill="#eee6e4"/><rect x="26" y="40" width="28" height="72" fill="#5c9ec8"/><rect x="38" y="66" width="5" height="14" fill="#c8e4f4"/><rect x="54" y="16" width="12" height="96" fill="#ac6e42"/><rect x="108" y="0" width="40" height="29" fill="#5aaedc"/><circle cx="122" cy="10" r="9" fill="#e0e070" opacity="0.8"/><circle cx="122" cy="10" r="5" fill="#fff8d0"/><path d="M100 112c0-14 12-22 32-22s34 8 34 22z" fill="#262428"/><path d="M102 78c0-16 8-25 18-25s18 9 18 25c0 6-4 12-18 12s-18-6-18-12z" fill="#3b2d2b"/><path d="M108 84c0-6 6-8 12-8s12 2 12 8v8h-24z" fill="#8a7a78"/></g><g filter="url(#pb5)"><ellipse cx="18" cy="39" rx="5.3" ry="2.6" transform="rotate(91 18 39)" fill="#6aa88a"/><ellipse cx="43" cy="56" rx="3.9" ry="2.8" transform="rotate(34 43 56)" fill="#4a8a6a"/><ellipse cx="32" cy="39" rx="4.9" ry="3.0" transform="rotate(8 32 39)" fill="#4a8a6a"/><ellipse cx="52" cy="30" rx="4.3" ry="2.1" transform="rotate(3 52 30)" fill="#6aa88a"/><ellipse cx="37" cy="35" rx="5.1" ry="2.8" transform="rotate(140 37 35)" fill="#3a7a62"/><ellipse cx="11" cy="43" rx="4.1" ry="2.9" transform="rotate(90 11 43)" fill="#285048"/><ellipse cx="50" cy="44" rx="3.7" ry="2.7" transform="rotate(168 50 44)" fill="#2a6a5a"/><ellipse cx="31" cy="23" rx="3.2" ry="2.3" transform="rotate(13 31 23)" fill="#356e58"/><ellipse cx="39" cy="38" rx="3.4" ry="1.9" transform="rotate(3 39 38)" fill="#285048"/><ellipse cx="43" cy="34" rx="5.2" ry="2.6" transform="rotate(176 43 34)" fill="#4a8a6a"/><ellipse cx="19" cy="42" rx="3.1" ry="2.9" transform="rotate(61 19 42)" fill="#3a7a62"/><ellipse cx="17" cy="63" rx="4.8" ry="2.0" transform="rotate(44 17 63)" fill="#2a6a5a"/><ellipse cx="49" cy="35" rx="4.0" ry="3.0" transform="rotate(34 49 35)" fill="#6aa88a"/><ellipse cx="42" cy="54" rx="2.9" ry="2.9" transform="rotate(21 42 54)" fill="#4a8a6a"/><ellipse cx="34" cy="34" rx="5.1" ry="3.5" transform="rotate(107 34 34)" fill="#2a6a5a"/><ellipse cx="37" cy="47" rx="5.1" ry="2.9" transform="rotate(18 37 47)" fill="#1f5a4c"/><ellipse cx="36" cy="44" rx="4.8" ry="2.4" transform="rotate(53 36 44)" fill="#2a6a5a"/><ellipse cx="42" cy="38" rx="4.4" ry="1.8" transform="rotate(66 42 38)" fill="#6aa88a"/><ellipse cx="4" cy="44" rx="4.0" ry="2.8" transform="rotate(156 4 44)" fill="#1f5a4c"/><ellipse cx="26" cy="26" rx="3.2" ry="2.8" transform="rotate(131 26 26)" fill="#1f5a4c"/><ellipse cx="32" cy="6" rx="3.1" ry="3.4" transform="rotate(159 32 6)" fill="#6aa88a"/><ellipse cx="38" cy="36" rx="2.8" ry="2.7" transform="rotate(46 38 36)" fill="#285048"/><ellipse cx="31" cy="24" rx="5.0" ry="2.8" transform="rotate(53 31 24)" fill="#1f5a4c"/><ellipse cx="62" cy="19" rx="2.9" ry="2.6" transform="rotate(118 62 19)" fill="#6aa88a"/><ellipse cx="26" cy="27" rx="5.3" ry="2.1" transform="rotate(3 26 27)" fill="#3a7a62"/><ellipse cx="26" cy="39" rx="2.6" ry="2.3" transform="rotate(96 26 39)" fill="#1f5a4c"/><ellipse cx="40" cy="38" rx="3.9" ry="2.4" transform="rotate(132 40 38)" fill="#6aa88a"/><ellipse cx="28" cy="30" rx="2.6" ry="1.8" transform="rotate(164 28 30)" fill="#285048"/><ellipse cx="33" cy="37" rx="4.3" ry="1.9" transform="rotate(12 33 37)" fill="#3a7a62"/><ellipse cx="13" cy="68" rx="2.7" ry="2.7" transform="rotate(133 13 68)" fill="#285048"/><ellipse cx="33" cy="27" rx="5.4" ry="2.4" transform="rotate(15 33 27)" fill="#4a8a6a"/><ellipse cx="55" cy="19" rx="3.8" ry="3.1" transform="rotate(155 55 19)" fill="#6aa88a"/><ellipse cx="53" cy="36" rx="3.6" ry="1.8" transform="rotate(13 53 36)" fill="#2a6a5a"/><ellipse cx="8" cy="6" rx="5.1" ry="3.0" transform="rotate(70 8 6)" fill="#285048"/><ellipse cx="29" cy="20" rx="3.9" ry="2.7" transform="rotate(93 29 20)" fill="#6aa88a"/><ellipse cx="51" cy="37" rx="3.9" ry="2.2" transform="rotate(126 51 37)" fill="#4a8a6a"/><ellipse cx="38" cy="15" rx="4.0" ry="3.3" transform="rotate(66 38 15)" fill="#1f5a4c"/><ellipse cx="30" cy="26" rx="3.0" ry="3.3" transform="rotate(119 30 26)" fill="#4a8a6a"/><ellipse cx="24" cy="34" rx="3.7" ry="2.2" transform="rotate(114 24 34)" fill="#356e58"/><ellipse cx="44" cy="7" rx="5.1" ry="2.5" transform="rotate(105 44 7)" fill="#3a7a62"/><ellipse cx="36" cy="41" rx="3.6" ry="3.3" transform="rotate(7 36 41)" fill="#2a6a5a"/><ellipse cx="44" cy="31" rx="3.0" ry="2.6" transform="rotate(50 44 31)" fill="#1f5a4c"/><ellipse cx="40" cy="23" rx="4.1" ry="2.9" transform="rotate(129 40 23)" fill="#356e58"/><ellipse cx="48" cy="32" rx="2.7" ry="1.9" transform="rotate(157 48 32)" fill="#2a6a5a"/><ellipse cx="29" cy="24" rx="3.6" ry="2.9" transform="rotate(102 29 24)" fill="#285048"/><ellipse cx="43" cy="45" rx="2.6" ry="3.2" transform="rotate(43 43 45)" fill="#1f5a4c"/><ellipse cx="45" cy="6" rx="2.8" ry="2.0" transform="rotate(96 45 6)" fill="#285048"/><ellipse cx="46" cy="6" rx="4.6" ry="2.1" transform="rotate(86 46 6)" fill="#1f5a4c"/><ellipse cx="29" cy="13" rx="4.1" ry="1.9" transform="rotate(41 29 13)" fill="#356e58"/><ellipse cx="23" cy="51" rx="4.1" ry="2.8" transform="rotate(136 23 51)" fill="#4a8a6a"/><ellipse cx="46" cy="18" rx="3.2" ry="2.5" transform="rotate(161 46 18)" fill="#4a8a6a"/><ellipse cx="44" cy="44" rx="4.4" ry="3.3" transform="rotate(68 44 44)" fill="#6aa88a"/><ellipse cx="25" cy="21" rx="5.0" ry="2.4" transform="rotate(59 25 21)" fill="#1f5a4c"/><ellipse cx="55" cy="49" rx="4.9" ry="3.4" transform="rotate(22 55 49)" fill="#1f5a4c"/><ellipse cx="62" cy="13" rx="5.4" ry="2.7" transform="rotate(142 62 13)" fill="#3a7a62"/><ellipse cx="32" cy="55" rx="2.5" ry="2.7" transform="rotate(7 32 55)" fill="#3a7a62"/><ellipse cx="13" cy="27" rx="4.0" ry="1.8" transform="rotate(146 13 27)" fill="#2a6a5a"/><ellipse cx="31" cy="36" rx="4.1" ry="3.0" transform="rotate(165 31 36)" fill="#4a8a6a"/><ellipse cx="43" cy="47" rx="4.7" ry="3.2" transform="rotate(124 43 47)" fill="#4a8a6a"/><ellipse cx="17" cy="25" rx="4.8" ry="2.5" transform="rotate(101 17 25)" fill="#356e58"/><ellipse cx="32" cy="16" rx="4.1" ry="3.2" transform="rotate(101 32 16)" fill="#3a7a62"/><ellipse cx="19" cy="6" rx="5.1" ry="2.8" transform="rotate(55 19 6)" fill="#1f5a4c"/><ellipse cx="50" cy="31" rx="4.2" ry="2.1" transform="rotate(96 50 31)" fill="#6aa88a"/><ellipse cx="47" cy="34" rx="4.1" ry="1.9" transform="rotate(165 47 34)" fill="#6aa88a"/><ellipse cx="39" cy="18" rx="4.0" ry="3.0" transform="rotate(12 39 18)" fill="#6aa88a"/><ellipse cx="6" cy="41" rx="4.9" ry="2.5" transform="rotate(44 6 41)" fill="#4a8a6a"/><ellipse cx="44" cy="44" rx="4.9" ry="3.3" transform="rotate(86 44 44)" fill="#3a7a62"/><ellipse cx="45" cy="43" rx="2.6" ry="2.2" transform="rotate(126 45 43)" fill="#2a6a5a"/><ellipse cx="41" cy="36" rx="2.5" ry="2.3" transform="rotate(130 41 36)" fill="#1f5a4c"/><ellipse cx="30" cy="30" rx="4.7" ry="2.0" transform="rotate(92 30 30)" fill="#3a7a62"/><ellipse cx="30" cy="14" rx="5.1" ry="1.8" transform="rotate(114 30 14)" fill="#356e58"/><ellipse cx="26" cy="33" rx="3.1" ry="2.9" transform="rotate(115 26 33)" fill="#6aa88a"/><ellipse cx="37" cy="50" rx="4.3" ry="2.0" transform="rotate(165 37 50)" fill="#285048"/><ellipse cx="44" cy="8" rx="3.4" ry="2.3" transform="rotate(166 44 8)" fill="#1f5a4c"/><ellipse cx="36" cy="26" rx="2.8" ry="3.3" transform="rotate(24 36 26)" fill="#2a6a5a"/><ellipse cx="34" cy="40" rx="5.0" ry="2.5" transform="rotate(142 34 40)" fill="#1f5a4c"/><ellipse cx="40" cy="51" rx="4.9" ry="2.0" transform="rotate(103 40 51)" fill="#3a7a62"/><ellipse cx="62" cy="16" rx="2.8" ry="2.7" transform="rotate(136 62 16)" fill="#6aa88a"/><ellipse cx="59" cy="34" rx="4.9" ry="2.6" transform="rotate(4 59 34)" fill="#356e58"/><ellipse cx="19" cy="29" rx="4.2" ry="2.0" transform="rotate(33 19 29)" fill="#1f5a4c"/><ellipse cx="38" cy="41" rx="3.3" ry="2.9" transform="rotate(104 38 41)" fill="#1f5a4c"/><ellipse cx="48" cy="30" rx="4.8" ry="2.4" transform="rotate(84 48 30)" fill="#6aa88a"/><ellipse cx="29" cy="41" rx="3.6" ry="2.9" transform="rotate(7 29 41)" fill="#1f5a4c"/><ellipse cx="40" cy="47" rx="4.7" ry="2.5" transform="rotate(35 40 47)" fill="#1f5a4c"/><ellipse cx="53" cy="47" rx="3.5" ry="1.9" transform="rotate(152 53 47)" fill="#356e58"/><ellipse cx="60" cy="17" rx="4.2" ry="2.1" transform="rotate(105 60 17)" fill="#3a7a62"/><ellipse cx="37" cy="25" rx="5.2" ry="3.1" transform="rotate(140 37 25)" fill="#356e58"/><ellipse cx="40" cy="31" rx="3.5" ry="2.7" transform="rotate(67 40 31)" fill="#4a8a6a"/><ellipse cx="35" cy="21" rx="4.7" ry="1.9" transform="rotate(62 35 21)" fill="#4a8a6a"/><ellipse cx="56" cy="50" rx="5.5" ry="3.3" transform="rotate(9 56 50)" fill="#3a7a62"/><ellipse cx="52" cy="27" rx="3.5" ry="2.9" transform="rotate(103 52 27)" fill="#6aa88a"/><ellipse cx="48" cy="41" rx="4.0" ry="2.2" transform="rotate(22 48 41)" fill="#4a8a6a"/><ellipse cx="37" cy="34" rx="4.3" ry="3.1" transform="rotate(46 37 34)" fill="#4a8a6a"/><ellipse cx="12" cy="33" rx="4.4" ry="1.8" transform="rotate(47 12 33)" fill="#3a7a62"/><ellipse cx="48" cy="25" rx="4.0" ry="3.4" transform="rotate(102 48 25)" fill="#2a6a5a"/><ellipse cx="19" cy="16" rx="2.7" ry="2.8" transform="rotate(137 19 16)" fill="#2a6a5a"/><ellipse cx="11" cy="54" rx="3.7" ry="3.4" transform="rotate(154 11 54)" fill="#6aa88a"/><ellipse cx="31" cy="31" rx="5.3" ry="2.5" transform="rotate(95 31 31)" fill="#6aa88a"/><ellipse cx="28" cy="49" rx="3.9" ry="2.3" transform="rotate(167 28 49)" fill="#285048"/><ellipse cx="32" cy="23" rx="2.5" ry="2.2" transform="rotate(8 32 23)" fill="#1f5a4c"/><ellipse cx="17" cy="45" rx="2.7" ry="2.3" transform="rotate(72 17 45)" fill="#6aa88a"/><ellipse cx="62" cy="32" rx="2.7" ry="3.3" transform="rotate(77 62 32)" fill="#4a8a6a"/><ellipse cx="34" cy="56" rx="2.6" ry="2.0" transform="rotate(146 34 56)" fill="#4a8a6a"/><ellipse cx="54" cy="60" rx="3.2" ry="3.0" transform="rotate(9 54 60)" fill="#4a8a6a"/><ellipse cx="26" cy="36" rx="2.7" ry="2.7" transform="rotate(22 26 36)" fill="#4a8a6a"/><ellipse cx="43" cy="44" rx="4.3" ry="2.9" transform="rotate(123 43 44)" fill="#3a7a62"/><ellipse cx="37" cy="18" rx="5.5" ry="3.4" transform="rotate(132 37 18)" fill="#1f5a4c"/><ellipse cx="19" cy="36" rx="3.4" ry="2.7" transform="rotate(152 19 36)" fill="#3a7a62"/><ellipse cx="31" cy="54" rx="4.2" ry="2.8" transform="rotate(114 31 54)" fill="#356e58"/><ellipse cx="36" cy="66" rx="4.0" ry="2.9" transform="rotate(35 36 66)" fill="#285048"/><ellipse cx="38" cy="35" rx="3.3" ry="2.5" transform="rotate(112 38 35)" fill="#2a6a5a"/><ellipse cx="36" cy="44" rx="4.8" ry="3.4" transform="rotate(29 36 44)" fill="#1f5a4c"/><ellipse cx="25" cy="25" rx="3.9" ry="2.2" transform="rotate(62 25 25)" fill="#285048"/><ellipse cx="52" cy="54" rx="4.9" ry="2.6" transform="rotate(148 52 54)" fill="#356e58"/><ellipse cx="35" cy="25" rx="3.8" ry="2.2" transform="rotate(146 35 25)" fill="#3a7a62"/><ellipse cx="48" cy="54" rx="4.3" ry="2.3" transform="rotate(137 48 54)" fill="#356e58"/><ellipse cx="46" cy="27" rx="3.6" ry="2.0" transform="rotate(158 46 27)" fill="#2a6a5a"/><ellipse cx="21" cy="30" rx="4.2" ry="3.2" transform="rotate(83 21 30)" fill="#356e58"/><ellipse cx="35" cy="29" rx="3.1" ry="2.9" transform="rotate(15 35 29)" fill="#3a7a62"/><ellipse cx="12" cy="35" rx="3.5" ry="3.3" transform="rotate(39 12 35)" fill="#285048"/><ellipse cx="32" cy="22" rx="2.9" ry="3.0" transform="rotate(102 32 22)" fill="#285048"/><ellipse cx="46" cy="27" rx="4.9" ry="2.3" transform="rotate(57 46 27)" fill="#4a8a6a"/><ellipse cx="55" cy="30" rx="4.0" ry="1.9" transform="rotate(149 55 30)" fill="#2a6a5a"/><ellipse cx="25" cy="44" rx="3.7" ry="2.1" transform="rotate(101 25 44)" fill="#356e58"/><ellipse cx="28" cy="39" rx="4.3" ry="2.1" transform="rotate(16 28 39)" fill="#4a8a6a"/><ellipse cx="42" cy="27" rx="2.6" ry="2.7" transform="rotate(98 42 27)" fill="#6aa88a"/><ellipse cx="33" cy="37" rx="5.0" ry="2.5" transform="rotate(105 33 37)" fill="#3a7a62"/><ellipse cx="35" cy="29" rx="2.7" ry="3.1" transform="rotate(162 35 29)" fill="#2a6a5a"/><ellipse cx="53" cy="37" rx="2.8" ry="3.2" transform="rotate(76 53 37)" fill="#285048"/><ellipse cx="38" cy="56" rx="4.1" ry="3.1" transform="rotate(71 38 56)" fill="#3a7a62"/><ellipse cx="38" cy="23" rx="2.9" ry="2.6" transform="rotate(145 38 23)" fill="#2a6a5a"/><ellipse cx="26" cy="6" rx="3.7" ry="3.2" transform="rotate(120 26 6)" fill="#356e58"/><ellipse cx="47" cy="34" rx="2.8" ry="2.6" transform="rotate(97 47 34)" fill="#2a6a5a"/><ellipse cx="14" cy="31" rx="4.9" ry="2.5" transform="rotate(76 14 31)" fill="#1f5a4c"/><ellipse cx="34" cy="42" rx="4.4" ry="3.0" transform="rotate(58 34 42)" fill="#4a8a6a"/><ellipse cx="24" cy="39" rx="5.4" ry="1.9" transform="rotate(56 24 39)" fill="#2a6a5a"/><ellipse cx="32" cy="41" rx="5.3" ry="3.4" transform="rotate(136 32 41)" fill="#2a6a5a"/><ellipse cx="9" cy="20" rx="2.6" ry="2.0" transform="rotate(33 9 20)" fill="#1f5a4c"/><ellipse cx="19" cy="25" rx="3.9" ry="2.7" transform="rotate(80 19 25)" fill="#3a7a62"/><ellipse cx="11" cy="50" rx="5.3" ry="2.9" transform="rotate(170 11 50)" fill="#6aa88a"/><ellipse cx="24" cy="35" rx="5.2" ry="3.4" transform="rotate(62 24 35)" fill="#6aa88a"/><ellipse cx="35" cy="28" rx="5.1" ry="2.5" transform="rotate(39 35 28)" fill="#1f5a4c"/><ellipse cx="38" cy="22" rx="4.1" ry="2.7" transform="rotate(49 38 22)" fill="#2a6a5a"/><ellipse cx="29" cy="26" rx="2.5" ry="2.6" transform="rotate(67 29 26)" fill="#356e58"/><ellipse cx="34" cy="48" rx="5.1" ry="2.5" transform="rotate(139 34 48)" fill="#1f5a4c"/><ellipse cx="32" cy="60" rx="4.0" ry="2.9" transform="rotate(179 32 60)" fill="#3a7a62"/><ellipse cx="30" cy="34" rx="4.2" ry="2.1" transform="rotate(37 30 34)" fill="#356e58"/><ellipse cx="38" cy="39" rx="3.6" ry="2.8" transform="rotate(95 38 39)" fill="#4a8a6a"/><ellipse cx="32" cy="29" rx="4.7" ry="2.7" transform="rotate(91 32 29)" fill="#2a6a5a"/><ellipse cx="37" cy="21" rx="5.3" ry="2.0" transform="rotate(149 37 21)" fill="#1f5a4c"/><ellipse cx="47" cy="37" rx="4.0" ry="3.4" transform="rotate(174 47 37)" fill="#3a7a62"/><ellipse cx="32" cy="39" rx="3.4" ry="2.6" transform="rotate(129 32 39)" fill="#3a7a62"/><ellipse cx="40" cy="37" rx="4.5" ry="2.9" transform="rotate(134 40 37)" fill="#356e58"/><ellipse cx="43" cy="17" rx="2.5" ry="2.4" transform="rotate(128 43 17)" fill="#1f5a4c"/><ellipse cx="32" cy="40" rx="4.8" ry="3.3" transform="rotate(152 32 40)" fill="#285048"/><ellipse cx="39" cy="51" rx="3.4" ry="2.4" transform="rotate(97 39 51)" fill="#3a7a62"/><ellipse cx="55" cy="28" rx="4.2" ry="1.9" transform="rotate(34 55 28)" fill="#4a8a6a"/><ellipse cx="33" cy="22" rx="5.3" ry="2.8" transform="rotate(130 33 22)" fill="#3a7a62"/><ellipse cx="22" cy="38" rx="2.8" ry="2.9" transform="rotate(24 22 38)" fill="#285048"/><ellipse cx="32" cy="26" rx="3.7" ry="3.2" transform="rotate(107 32 26)" fill="#2a6a5a"/></g></svg>
<div class="a" style="left:1200px;top:205px;width:132px;height:25px;background:rgba(40,40,42,0.85);border-radius:6px"></div><svg style="left:1203px;top:209px" width="18" height="18"><path d="M5.5 4a3.5 3.5 0 0 1 7 0v6.5a3.5 3.5 0 0 1-7 0z" fill="#ee5264"/><path d="M9 13.5v2.5M6 16.2h6" fill="none" stroke="#ee5264" stroke-width="1.6"/><path d="M1.5 16.5l15-15" stroke="#262729" stroke-width="3"/><path d="M1.5 16.5l15-15" stroke="#ee5264" stroke-width="1.4"/></svg>
<div class="a" style="left:1200px;top:318px;width:146px;height:25px;background:rgba(40,40,42,0.85);border-radius:6px"></div><svg style="left:1203px;top:322px" width="18" height="18"><path d="M5.5 4a3.5 3.5 0 0 1 7 0v6.5a3.5 3.5 0 0 1-7 0z" fill="#ee5264"/><path d="M9 13.5v2.5M6 16.2h6" fill="none" stroke="#ee5264" stroke-width="1.6"/><path d="M1.5 16.5l15-15" stroke="#262729" stroke-width="3"/><path d="M1.5 16.5l15-15" stroke="#ee5264" stroke-width="1.4"/></svg>
<div class="a" style="left:1200px;top:431px;width:77px;height:23.5px;background:rgba(40,40,42,0.85);border-radius:6px"></div><svg style="left:1203px;top:435px" width="18" height="18"><path d="M5.5 4a3.5 3.5 0 0 1 7 0v6.5a3.5 3.5 0 0 1-7 0z" fill="#ee5264"/><path d="M9 13.5v2.5M6 16.2h6" fill="none" stroke="#ee5264" stroke-width="1.6"/><path d="M1.5 16.5l15-15" stroke="#262729" stroke-width="3"/><path d="M1.5 16.5l15-15" stroke="#ee5264" stroke-width="1.4"/></svg>
<div class="a" style="left:1200px;top:544px;width:119px;height:23.5px;background:rgba(40,40,42,0.85);border-radius:6px"></div><svg style="left:1203px;top:548px" width="18" height="18"><path d="M5.5 4a3.5 3.5 0 0 1 7 0v6.5a3.5 3.5 0 0 1-7 0z" fill="#ee5264"/><path d="M9 13.5v2.5M6 16.2h6" fill="none" stroke="#ee5264" stroke-width="1.6"/><path d="M1.5 16.5l15-15" stroke="#262729" stroke-width="3"/><path d="M1.5 16.5l15-15" stroke="#ee5264" stroke-width="1.4"/></svg>
<div class="a" style="left:1200px;top:656px;width:162px;height:24px;background:rgba(40,40,42,0.85);border-radius:6px"></div><svg style="left:1203px;top:660px" width="18" height="18"><path d="M5.5 4a3.5 3.5 0 0 1 7 0v6.5a3.5 3.5 0 0 1-7 0z" fill="#ee5264"/><path d="M9 13.5v2.5M6 16.2h6" fill="none" stroke="#ee5264" stroke-width="1.6"/><path d="M1.5 16.5l15-15" stroke="#262729" stroke-width="3"/><path d="M1.5 16.5l15-15" stroke="#ee5264" stroke-width="1.4"/></svg>
<div class="a" style="left:1195px;top:682px;width:202px;height:115px;border:3px solid #14ee8e;border-radius:2px 2px 10px 10px;overflow:hidden;background:#bdc0c3"><svg style="left:0;top:0" width="196" height="109"><defs><filter id="pb3"><feGaussianBlur stdDeviation="3"/></filter><filter id="pb4"><feGaussianBlur stdDeviation="0.9"/></filter><linearGradient id="g7" x1="0" y1="0" x2="0" y2="1"><stop offset="0" stop-color="#b9bcbf"/><stop offset="1" stop-color="#a8abae"/></linearGradient></defs><rect width="196" height="109" fill="url(#g7)"/><g filter="url(#pb3)" fill="#9fa3a8"><rect x="12" y="10" width="50" height="6"/><rect x="100" y="18" width="45" height="6"/><rect x="60" y="38" width="55" height="6"/><rect x="8" y="56" width="55" height="6"/><rect x="172" y="6" width="8" height="40" fill="#7a8ca0"/></g><g filter="url(#pb4)"><path d="M90 112C94 90 106 74 122 69L146 67C166 70 190 82 197 98V112Z" fill="#1f1f1f"/><path d="M116 68L130 65H146L153 71L145 88L135 81L125 88Z" fill="#eceef0"/><ellipse cx="132" cy="53" rx="17" ry="24" fill="#c9a69c"/><path d="M114 52C111 35 120 26 132 26S153 35 150 52C148 43 143 37 132 37S117 43 114 52Z" fill="#dcd8d4"/><path d="M124 61c3-2 6-2 8 0 2-2 5-2 8 0" stroke="#e8e8e8" stroke-width="2.5" fill="none"/><path d="M124 48h5M136 48h5" stroke="#6a5048" stroke-width="1.5"/></g></svg></div>
<div class="a" style="left:1200px;top:769px;width:146px;height:23px;background:rgba(45,45,47,0.75);border-radius:6px"></div>
<span class="t" id="t0" style="left:208px;top:103.58px;font-size:10.5px;color:#f6e3dc;transform:scaleX(0.8412);">Бібліотекарі 2025&nbsp; -&nbsp; PowerPoint</span>
<span class="t" id="t1" style="left:469.5px;top:104.08px;font-size:10.5px;color:#5b2f22;transform:scaleX(0.8687);">Пошук</span>
<span class="t" id="t2" style="left:961px;top:104.80px;font-size:10px;color:#a8453a;transform:scaleX(0.8941);">Увійти</span>
<span class="t" id="t3" style="left:3px;top:128.65px;font-size:11px;color:#444;transform:scaleX(0.8504);">Файл</span>
<span class="t" id="t4" style="left:46px;top:128.65px;font-size:11px;color:#262626;font-weight:bold;transform:scaleX(0.8620);">Основне</span>
<span class="t" id="t5" style="left:105px;top:128.65px;font-size:11px;color:#444;transform:scaleX(0.8817);">Вставлення</span>
<span class="t" id="t6" style="left:178px;top:128.65px;font-size:11px;color:#444;transform:scaleX(0.9407);">Конструктор</span>
<span class="t" id="t7" style="left:257px;top:128.65px;font-size:11px;color:#444;transform:scaleX(0.9028);">Переходи</span>
<span class="t" id="t8" style="left:322px;top:128.65px;font-size:11px;color:#444;transform:scaleX(0.9492);">Анімація</span>
<span class="t" id="t9" style="left:384px;top:128.65px;font-size:11px;color:#444;transform:scaleX(0.9159);">Показ слайдів</span>
<span class="t" id="t10" style="left:469.5px;top:128.65px;font-size:11px;color:#444;transform:scaleX(0.9133);">Рецензування</span>
<span class="t" id="t11" style="left:554px;top:128.65px;font-size:11px;color:#444;transform:scaleX(0.9114);">Подання</span>
<span class="t" id="t12" style="left:613.5px;top:128.65px;font-size:11px;color:#444;transform:scaleX(0.9117);">Записування</span>
<span class="t" id="t13" style="left:693px;top:128.65px;font-size:11px;color:#444;transform:scaleX(0.9096);">Довідка</span>
<span class="t" id="t14" style="left:1037px;top:128.65px;font-size:11px;color:#b9472b;font-weight:bold;transform:scaleX(0.8952);">Спільний доступ</span>
<span class="t" id="t15" style="left:0px;top:174.57px;font-size:10.5px;color:#444;transform:scaleX(0.8017);">Вставити</span>
<span class="t" id="t16" style="left:1px;top:205.85px;font-size:9px;color:#444;transform:scaleX(0.8499);">Буфер обміну</span>
<span class="t" id="t17" style="left:80px;top:174.57px;font-size:10.5px;color:#444;transform:scaleX(0.8247);">Створити</span>
<span class="t" id="t18" style="left:84px;top:187.57px;font-size:10.5px;color:#444;transform:scaleX(0.8556);">слайд</span>
<span class="t" id="t19" style="left:137px;top:151.57px;font-size:10.5px;color:#444;transform:scaleX(0.8412);">Макет</span>
<span class="t" id="t20" style="left:137px;top:169.57px;font-size:10.5px;color:#444;transform:scaleX(0.8299);">Скинути</span>
<span class="t" id="t21" style="left:137px;top:187.57px;font-size:10.5px;color:#444;transform:scaleX(0.8270);">Розділ</span>
<span class="t" id="t22" style="left:115px;top:205.85px;font-size:9px;color:#444;transform:scaleX(0.7797);">Слайди</span>
<span class="t" id="t23" style="left:343px;top:157.80px;font-size:12px;color:#b4b4b4;transform:scaleX(1.1228);">A</span>
<span class="t" id="t24" style="left:353px;top:154.05px;font-size:7px;color:#b4b4b4;">^</span>
<span class="t" id="t25" style="left:362px;top:159.50px;font-size:10px;color:#b4b4b4;transform:scaleX(1.1991);">A</span>
<span class="t" id="t26" style="left:370px;top:154.05px;font-size:7px;color:#b4b4b4;">˅</span>
<span class="t" id="t27" style="left:382px;top:158.65px;font-size:11px;color:#b4b4b4;transform:scaleX(1.2255);">A</span>
<span class="t" id="t28" style="left:192px;top:181.65px;font-size:11px;color:#9a9a9a;font-weight:bold;transform:scaleX(1.0047);">Ж</span>
<span class="t" id="t29" style="left:211px;top:181.65px;font-size:11px;color:#b4b4b4;transform:scaleX(0.9253);font-style:italic;">К</span>
<span class="t" id="t30" style="left:229px;top:181.50px;font-size:10px;color:#b4b4b4;transform:scaleX(0.9739);">П</span>
<span class="t" id="t31" style="left:247px;top:181.65px;font-size:11px;color:#b4b4b4;transform:scaleX(0.9532);">S</span>
<span class="t" id="t32" style="left:263px;top:182.35px;font-size:9px;color:#b4b4b4;transform:scaleX(1.0983);">ab</span>
<span class="t" id="t33" style="left:280px;top:179.35px;font-size:9px;color:#b4b4b4;transform:scaleX(0.9697);">AV</span>
<span class="t" id="t34" style="left:309px;top:181.65px;font-size:11px;color:#b4b4b4;transform:scaleX(0.9652);">Aa</span>
<span class="t" id="t35" style="left:372px;top:180.50px;font-size:10px;color:#b4b4b4;transform:scaleX(1.3489);">A</span>
<span class="t" id="t36" style="left:274px;top:205.85px;font-size:9px;color:#444;transform:scaleX(0.8101);">Шрифт</span>
<span class="t" id="t37" style="left:555px;top:152.07px;font-size:10.5px;color:#a6a6a6;transform:scaleX(0.8561);">Напрямок тексту</span>
<span class="t" id="t38" style="left:555px;top:169.07px;font-size:10.5px;color:#a6a6a6;transform:scaleX(0.8442);">Вирівняти текст</span>
<span class="t" id="t39" style="left:555px;top:186.07px;font-size:10.5px;color:#a6a6a6;transform:scaleX(0.8501);">Перетворити на об’єкт SmartArt</span>
<span class="t" id="t40" style="left:537px;top:205.85px;font-size:9px;color:#444;transform:scaleX(0.8713);">Абзац</span>
<span class="t" id="t41" style="left:816px;top:174.57px;font-size:10.5px;color:#333;transform:scaleX(0.8511);">Упорядкувати</span>
<span class="t" id="t42" style="left:876px;top:174.57px;font-size:10.5px;color:#a6a6a6;transform:scaleX(0.8357);">Експрес-</span>
<span class="t" id="t43" style="left:886px;top:186.07px;font-size:10.5px;color:#a6a6a6;transform:scaleX(0.8200);">стилі</span>
<span class="t" id="t44" style="left:931px;top:151.57px;font-size:10.5px;color:#a6a6a6;transform:scaleX(0.8268);">Заливка фігури</span>
<span class="t" id="t45" style="left:931px;top:169.07px;font-size:10.5px;color:#a6a6a6;transform:scaleX(0.8502);">Контур фігури</span>
<span class="t" id="t46" style="left:931px;top:185.57px;font-size:10.5px;color:#a6a6a6;transform:scaleX(0.7984);">Ефекти для фігур</span>
<span class="t" id="t47" style="left:835px;top:205.85px;font-size:9px;color:#444;transform:scaleX(0.8756);">Малювання</span>
<span class="t" id="t48" style="left:1042px;top:151.07px;font-size:10.5px;color:#333;transform:scaleX(0.8398);">Знайти</span>
<span class="t" id="t49" style="left:1042px;top:168.57px;font-size:10.5px;color:#333;transform:scaleX(0.8621);">Замінити</span>
<span class="t" id="t50" style="left:1043px;top:185.57px;font-size:10.5px;color:#333;transform:scaleX(0.8182);">Виділити</span>
<span class="t" id="t51" style="left:1039px;top:205.85px;font-size:9px;color:#444;transform:scaleX(0.8307);">Редагування</span>
<span class="t" id="t52" style="left:1.2px;top:229.25px;font-size:11px;color:#555;transform:scaleX(0.8163);">1</span>
<span class="t" id="t53" style="left:1.2px;top:311.25px;font-size:11px;color:#555;transform:scaleX(0.8163);">2</span>
<span class="t" id="t54" style="left:1.2px;top:393.25px;font-size:11px;color:#555;transform:scaleX(0.8163);">3</span>
<span class="t" id="t55" style="left:1.2px;top:475.25px;font-size:11px;color:#c0504d;transform:scaleX(0.8163);">4</span>
<span class="t" id="t56" style="left:1.2px;top:557.25px;font-size:11px;color:#555;transform:scaleX(0.8163);">5</span>
<span class="t" id="t57" style="left:1.2px;top:639.25px;font-size:11px;color:#555;transform:scaleX(0.8163);">6</span>
<span class="t" id="t58" style="left:43.5px;top:513.30px;font-size:10px;color:#6a6a6a;transform:scaleX(0.8979);">[Без заголовка]</span>
<span class="t" id="t59" style="left:356px;top:236.45px;font-size:23px;color:#0d0d0d;font-weight:bold;transform:scaleX(0.9741);">ПЕРСПЕКТИВИ РОЗВИТКУ СУЧАСНИХ БІБЛІОТЕК</span>
<span class="t" id="t60" style="left:338.5px;top:332.62px;font-size:11.5px;color:#4b5463;font-weight:bold;transform:scaleX(1.0287);">ЕЛЕКТРОННІ БІБЛІОТЕКИ ТА ВІДКРИТИЙ ДОСТУП</span>
<span class="t" id="t61" style="left:338.5px;top:346.44px;font-size:12.3px;color:#151515;transform:scaleX(0.9627);">- гібридні бібліотеки;</span>
<span class="t" id="t62" style="left:338.5px;top:360.64px;font-size:12.3px;color:#151515;transform:scaleX(0.9583);">- цифровізація та інтеграція з електронними ресурсами.</span>
<span class="t" id="t63" style="left:338.5px;top:403.53px;font-size:11.5px;color:#4b5463;font-weight:bold;transform:scaleX(1.0258);">STEM/STEAM-ЛАБОРАТОРІЇ ТА КРЕАТИВНІ ХАБИ</span>
<span class="t" id="t64" style="left:338.5px;top:417.35px;font-size:12.3px;color:#151515;transform:scaleX(0.9584);">-&nbsp; бібліотека як центр інновацій, де поєднуються книги, техніка, 3D-друк,</span>
<span class="t" id="t65" style="left:338.5px;top:431.55px;font-size:12.3px;color:#151515;transform:scaleX(0.9494);">мультимедіа.</span>
<span class="t" id="t66" style="left:338.5px;top:474.73px;font-size:11.5px;color:#4b5463;font-weight:bold;transform:scaleX(1.0278);">ГРАНТОВІ ТА ПАРТНЕРСЬКІ ПРОЄКТИ</span>
<span class="t" id="t67" style="left:338.5px;top:488.55px;font-size:12.3px;color:#151515;transform:scaleX(0.9608);">-&nbsp; залучення фінансування від міжнародних організацій, місцевих</span>
<span class="t" id="t68" style="left:338.5px;top:502.75px;font-size:12.3px;color:#151515;transform:scaleX(0.9565);">громад, приватних донорів.</span>
<span class="t" id="t69" style="left:338.5px;top:545.73px;font-size:11.5px;color:#4b5463;font-weight:bold;transform:scaleX(1.0281);">АНАЛІТИКА ТА ПЕРСОНАЛІЗАЦІЯ</span>
<span class="t" id="t70" style="left:338.5px;top:559.54px;font-size:12.3px;color:#151515;transform:scaleX(0.9604);">- використання даних про запити користувачів для формування фонду й</span>
<span class="t" id="t71" style="left:338.5px;top:573.75px;font-size:12.3px;color:#151515;transform:scaleX(0.9601);">індивідуальних рекомендацій;</span>
<span class="t" id="t72" style="left:338.5px;top:587.94px;font-size:12.3px;color:#151515;transform:scaleX(0.9602);">- бібліотеки спільного користування, міжбібліотечний обмін.</span>
<span class="t" id="t73" style="left:0px;top:692.42px;font-size:9.5px;color:#555;transform:scaleX(0.7394);">Слайд 4 з 6</span>
<span class="t" id="t74" style="left:76px;top:692.42px;font-size:9.5px;color:#555;transform:scaleX(0.7920);">українська</span>
<span class="t" id="t75" style="left:769px;top:692.42px;font-size:9.5px;color:#555;transform:scaleX(0.7982);">Нотатки</span>
<span class="t" id="t76" style="left:824px;top:692.42px;font-size:9.5px;color:#555;transform:scaleX(0.8276);">Примітки</span>
<span class="t" id="t77" style="left:1096px;top:692.42px;font-size:9.5px;color:#555;transform:scaleX(0.7888);">85%</span>
<span class="t" id="t78" style="left:1228px;top:100.75px;font-size:15px;color:#f2f2f2;transform:scaleX(1.0321);">Natalia Divinska</span>
<span class="t" id="t79" style="left:1228px;top:210.75px;font-size:15px;color:#f2f2f2;transform:scaleX(0.9894);">Тетяна Хандій</span>
<span class="t" id="t80" style="left:1213.3px;top:280.25px;font-size:19px;color:#ececec;font-weight:bold;transform:scaleX(1.1324);">Ratnikova Nadiy</span>
<span class="t" id="t81" style="left:1263.6px;top:392.85px;font-size:19px;color:#ececec;font-weight:bold;transform:scaleX(1.1023);">Олена</span>
<span class="t" id="t82" style="left:1230.5px;top:505.45px;font-size:19px;color:#ececec;font-weight:bold;transform:scaleX(1.1438);">Надія Відюк</span>
<span class="t" id="t83" style="left:1204.8px;top:617.25px;font-size:19px;color:#ececec;font-weight:bold;transform:scaleX(1.1288);">Тетяна&nbsp; Харлам...</span>
<span class="t" id="t84" style="left:1228px;top:323.75px;font-size:15px;color:#f2f2f2;transform:scaleX(1.0346);">Ratnikova Nadiy</span>
<span class="t" id="t85" style="left:1228px;top:435.25px;font-size:15px;color:#f2f2f2;transform:scaleX(0.9727);">Олена</span>
<span class="t" id="t86" style="left:1228px;top:548.25px;font-size:15px;color:#f2f2f2;transform:scaleX(1.0305);">Надія Відюк</span>
<span class="t" id="t87" style="left:1228px;top:660.75px;font-size:15px;color:#f2f2f2;transform:scaleX(0.9921);">Тетяна Харламова</span>
<span class="t" id="t88" style="left:1205px;top:772.75px;font-size:15px;color:#f2f2f2;transform:scaleX(1.0005);">Lesia Shcherbakova</span>
</body></html>
